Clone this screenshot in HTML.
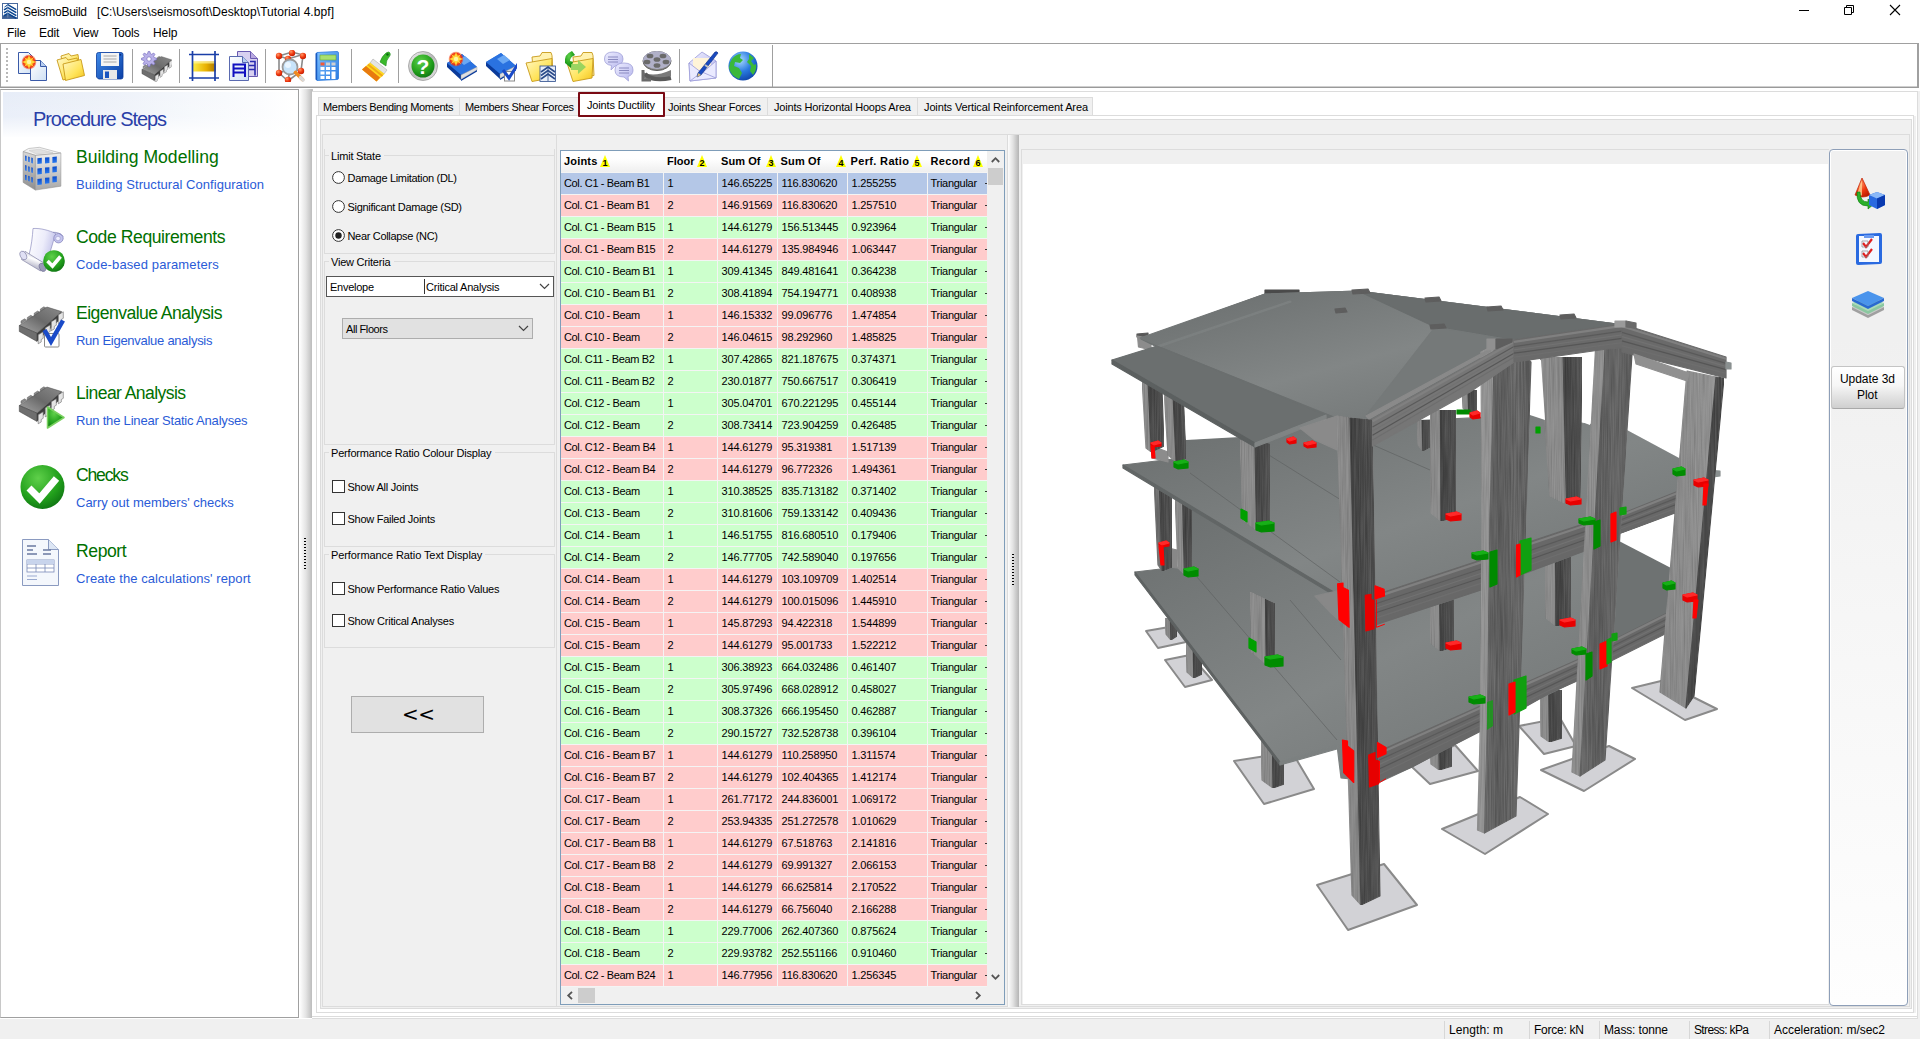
<!DOCTYPE html>
<html><head><meta charset="utf-8"><title>SeismoBuild</title>
<style>
*{box-sizing:border-box;margin:0;padding:0}
html,body{width:1920px;height:1039px;overflow:hidden;background:#fff}
body{position:relative;font-family:"Liberation Sans",sans-serif;font-size:12px;color:#000}
.a{position:absolute}
.t{position:absolute;white-space:pre;line-height:1}
.seg{font-size:12px;letter-spacing:-0.25px}
.tah{font-size:11px;letter-spacing:-0.32px}
.num{font-size:11px;letter-spacing:0px}
.b{font-weight:bold;letter-spacing:0.25px}
.ln{position:absolute;background:#dcdcdc}
.bx{position:absolute;border:1px solid #dcdcdc}
.gb{position:absolute;border:1px solid #dcdcdc}
.gbl{position:absolute;background:#f0f0f0;padding:0 2px;white-space:pre;font-size:11px;letter-spacing:-0.32px;line-height:1}
.sep{position:absolute;width:1px;background:#a0a0a0;top:49px;height:34px}
.row{position:absolute;left:561px;width:426px;height:21px}
.c{position:absolute;top:0;height:21px}
.c span{position:absolute;top:5px;white-space:pre;font-size:11px;line-height:1}
.r .c{background:#ffcccc}.g .c{background:#ccffcc}.s .c{background:#b4c7e7}
.ph{color:#007000;font-size:17.6px;letter-spacing:0px}
.ps{color:#2a5bd7;font-size:13px;letter-spacing:0.05px}
</style></head>
<body>
<div class="t seg" style="left:23px;top:6px;letter-spacing:-0.270px;font-size:12px;">SeismoBuild</div>
<div class="t seg" style="left:97px;top:6px;letter-spacing:0.062px;font-size:12px;">[C:\Users\seismosoft\Desktop\Tutorial 4.bpf]</div>
<svg class="a" style="left:1780px;top:0" width="140" height="22" viewBox="0 0 140 22"><path d="M19 10.5h10" stroke="#000" stroke-width="1" fill="none"/><path d="M64.5 7.5h7v7h-7z M66.5 7.5v-2h7v7h-2" stroke="#000" stroke-width="1" fill="none"/><path d="M110 5l10 10M120 5l-10 10" stroke="#000" stroke-width="1.1" fill="none"/></svg>
<div class="t seg" style="left:7px;top:27px;letter-spacing:-0.1px">File</div>
<div class="t seg" style="left:39px;top:27px;letter-spacing:-0.1px">Edit</div>
<div class="t seg" style="left:73px;top:27px;letter-spacing:-0.1px">View</div>
<div class="t seg" style="left:112px;top:27px;letter-spacing:-0.1px">Tools</div>
<div class="t seg" style="left:153px;top:27px;letter-spacing:-0.1px">Help</div>
<div class="a" style="left:0;top:43px;width:1919px;height:45px;border:1px solid #a0a0a0;border-bottom:1px solid #9a9a9a;border-right:2px solid #a0a0a0;background:#fff;box-shadow:inset 0 -1px 0 #cfcfcf"></div>
<div class="a" style="left:6px;top:48px;width:2px;height:35px;background:repeating-linear-gradient(#b8b8b8 0 2px,#fff 2px 4px)"></div>
<div class="sep" style="left:132px;"></div>
<div class="sep" style="left:179px;"></div>
<div class="sep" style="left:265px;"></div>
<div class="sep" style="left:351px;"></div>
<div class="sep" style="left:398px;"></div>
<div class="sep" style="left:679px;"></div>
<div class="sep" style="left:772px;top:45px;height:42px"></div>
<div class="a" style="left:0;top:89px;width:299px;height:929px;border:1px solid #a0a0a0;border-left:1px solid #c8c8c8;background:#fff"></div>
<div class="a" style="left:3px;top:92px;width:291px;height:45px;background:linear-gradient(to bottom,rgba(255,255,255,0) 0,rgba(255,255,255,0.15) 55%,rgba(255,255,255,0.95) 100%),linear-gradient(to right,#e7edf8 0,#edf1f9 35%,#f5f8fc 65%,#fbfcfe 88%,#fff 100%)"></div>
<div class="t " style="left:33px;top:109px;color:#2a3fa8;letter-spacing:-1.070px;font-size:20px;">Procedure Steps</div>
<div class="t ph" style="left:76px;top:149px;letter-spacing:-0.006px;font-size:17.6px;">Building Modelling</div>
<div class="t ps" style="left:76px;top:178px;letter-spacing:0.049px;font-size:13px;">Building Structural Configuration</div>
<div class="t ph" style="left:76px;top:229px;letter-spacing:-0.437px;font-size:17.6px;">Code Requirements</div>
<div class="t ps" style="left:76px;top:258px;letter-spacing:0.125px;font-size:13px;">Code-based parameters</div>
<div class="t ph" style="left:76px;top:305px;letter-spacing:-0.556px;font-size:17.6px;">Eigenvalue Analysis</div>
<div class="t ps" style="left:76px;top:334px;letter-spacing:-0.267px;font-size:13px;">Run Eigenvalue analysis</div>
<div class="t ph" style="left:76px;top:385px;letter-spacing:-0.596px;font-size:17.6px;">Linear Analysis</div>
<div class="t ps" style="left:76px;top:414px;letter-spacing:-0.192px;font-size:13px;">Run the Linear Static Analyses</div>
<div class="t ph" style="left:76px;top:467px;letter-spacing:-1.194px;font-size:17.6px;">Checks</div>
<div class="t ps" style="left:76px;top:496px;letter-spacing:-0.005px;font-size:13px;">Carry out members' checks</div>
<div class="t ph" style="left:76px;top:543px;letter-spacing:-0.422px;font-size:17.6px;">Report</div>
<div class="t ps" style="left:76px;top:572px;letter-spacing:0.080px;font-size:13px;">Create the calculations' report</div>
<div class="a" style="left:300px;top:89px;width:13px;height:929px;background:linear-gradient(90deg,#fdfdfd,#e4e4e4 45%,#bdbdbd 92%,#c8c8c8)"></div>
<div class="a" style="left:304px;top:538px;width:2px;height:32px;background:repeating-linear-gradient(#000 0 1px,transparent 1px 3px)"></div>
<div class="bx" style="left:312px;top:91px;width:1606px;height:928px;background:#fff;border-left:none"></div>
<div class="a" style="left:1918px;top:91px;width:2px;height:928px;background:#f0f0f0"></div>
<div class="ln" style="left:312px;top:1016px;width:1606px;height:1px"></div>
<div class="bx" style="left:318px;top:97px;width:142px;height:19px;background:#f0f0f0;border-bottom:none"></div>
<div class="bx" style="left:459px;top:97px;width:120px;height:19px;background:#f0f0f0;border-bottom:none"></div>
<div class="bx" style="left:664px;top:97px;width:104px;height:19px;background:#f0f0f0;border-bottom:none"></div>
<div class="bx" style="left:767px;top:97px;width:151px;height:19px;background:#f0f0f0;border-bottom:none"></div>
<div class="bx" style="left:917px;top:97px;width:176px;height:19px;background:#f0f0f0;border-bottom:none"></div>
<div class="bx" style="left:316px;top:115px;width:1598px;height:898px;background:#fff"></div>
<div class="a" style="left:1914px;top:116px;width:2px;height:897px;background:#f0f0f0"></div>
<div class="t tah" style="left:323px;top:102px;letter-spacing:-0.321px;font-size:11px;">Members Bending Moments</div>
<div class="t tah" style="left:465px;top:102px;letter-spacing:-0.312px;font-size:11px;">Members Shear Forces</div>
<div class="t tah" style="left:668px;top:102px;letter-spacing:-0.268px;font-size:11px;">Joints Shear Forces</div>
<div class="t tah" style="left:774px;top:102px;letter-spacing:-0.180px;font-size:11px;">Joints Horizontal Hoops Area</div>
<div class="t tah" style="left:924px;top:102px;letter-spacing:-0.125px;font-size:11px;">Joints Vertical Reinforcement Area</div>
<div class="a" style="left:578px;top:92px;width:87px;height:25px;border:2.500px solid #7a0a14;background:#fff;border-radius:1px"></div>
<div class="t tah" style="left:587px;top:100px;letter-spacing:-0.153px;font-size:11px;">Joints Ductility</div>
<div class="bx" style="left:320px;top:119px;width:1592px;height:890px;background:#f0f0f0"></div>
<div class="bx" style="left:322px;top:134px;width:1588px;height:873px;background:#f0f0f0"></div>
<div class="a" style="left:0;top:1019px;width:1920px;height:20px;background:#f0f0f0"></div>
<div class="ln" style="left:1444px;top:1021px;width:1px;height:18px;background:#d7d7d7"></div>
<div class="ln" style="left:1529px;top:1021px;width:1px;height:18px;background:#d7d7d7"></div>
<div class="ln" style="left:1599px;top:1021px;width:1px;height:18px;background:#d7d7d7"></div>
<div class="ln" style="left:1689px;top:1021px;width:1px;height:18px;background:#d7d7d7"></div>
<div class="ln" style="left:1769px;top:1021px;width:1px;height:18px;background:#d7d7d7"></div>
<div class="t seg" style="left:1449px;top:1024px;letter-spacing:0.078px;font-size:12px;">Length: m</div>
<div class="t seg" style="left:1534px;top:1024px;letter-spacing:-0.252px;font-size:12px;">Force: kN</div>
<div class="t seg" style="left:1604px;top:1024px;letter-spacing:-0.138px;font-size:12px;">Mass: tonne</div>
<div class="t seg" style="left:1694px;top:1024px;letter-spacing:-0.636px;font-size:12px;">Stress: kPa</div>
<div class="t seg" style="left:1774px;top:1024px;letter-spacing:-0.021px;font-size:12px;">Acceleration: m/sec2</div>
<div class="ln" style="left:556px;top:135px;width:1px;height:871px"></div>
<div class="bx" style="left:324px;top:149px;width:231px;height:10px;border-bottom:none;border-top:none"></div>
<div class="gb" style="left:324px;top:155px;width:231px;height:99px"></div><div class="a" style="left:329px;top:155px;width:55px;height:1px;background:#f0f0f0"></div><div class="t tah" style="left:331px;top:151px;letter-spacing:-0.197px;font-size:11px;">Limit State</div>
<div class="gb" style="left:324px;top:261px;width:231px;height:184px"></div><div class="a" style="left:329px;top:261px;width:64.5px;height:1px;background:#f0f0f0"></div><div class="t tah" style="left:331px;top:257px;letter-spacing:-0.221px;font-size:11px;">View Criteria</div>
<div class="gb" style="left:324px;top:452px;width:231px;height:95px"></div><div class="a" style="left:329px;top:452px;width:165.5px;height:1px;background:#f0f0f0"></div><div class="t tah" style="left:331px;top:448px;letter-spacing:-0.187px;font-size:11px;">Performance Ratio Colour Display</div>
<div class="gb" style="left:324px;top:554px;width:231px;height:94px"></div><div class="a" style="left:329px;top:554px;width:156.3px;height:1px;background:#f0f0f0"></div><div class="t tah" style="left:331px;top:550px;letter-spacing:-0.089px;font-size:11px;">Performance Ratio Text Display</div>
<svg class="a" style="left:332px;top:171px" width="13" height="13"><circle cx="6.5" cy="6.5" r="5.9" fill="#fff" stroke="#333" stroke-width="1"/></svg>
<div class="t tah" style="left:347.5px;top:173px;letter-spacing:-0.317px;font-size:11px;">Damage Limitation (DL)</div>
<svg class="a" style="left:332px;top:200px" width="13" height="13"><circle cx="6.5" cy="6.5" r="5.9" fill="#fff" stroke="#333" stroke-width="1"/></svg>
<div class="t tah" style="left:347.5px;top:202px;letter-spacing:-0.298px;font-size:11px;">Significant Damage (SD)</div>
<svg class="a" style="left:332px;top:229px" width="13" height="13"><circle cx="6.5" cy="6.5" r="5.9" fill="#fff" stroke="#333" stroke-width="1"/><circle cx="6.5" cy="6.5" r="3.2" fill="#222"/></svg>
<div class="t tah" style="left:347.5px;top:231px;letter-spacing:-0.323px;font-size:11px;">Near Collapse (NC)</div>
<div class="a" style="left:326px;top:276px;width:228px;height:21px;border:1px solid #555;background:#fff"></div>
<div class="a" style="left:424px;top:279px;width:1px;height:15px;background:#333"></div>
<div class="t tah" style="left:330px;top:282px;letter-spacing:-0.268px;font-size:11px;">Envelope</div>
<div class="t tah" style="left:426px;top:282px;letter-spacing:-0.221px;font-size:11px;">Critical Analysis</div>
<svg class="a" style="left:539px;top:283px" width="11" height="7"><path d="M1 1l4.5 4.5L10 1" fill="none" stroke="#444" stroke-width="1.2"/></svg>
<div class="a" style="left:342px;top:318px;width:191px;height:21px;border:1px solid #adadad;background:#e1e1e1"></div>
<div class="t tah" style="left:346px;top:324px;letter-spacing:-0.427px;font-size:11px;">All Floors</div>
<svg class="a" style="left:518px;top:325px" width="11" height="7"><path d="M1 1l4.5 4.5L10 1" fill="none" stroke="#444" stroke-width="1.2"/></svg>
<div class="a" style="left:332px;top:480px;width:13px;height:13px;border:1px solid #333;background:#fff"></div>
<div class="t tah" style="left:347.5px;top:482px;letter-spacing:-0.213px;font-size:11px;">Show All Joints</div>
<div class="a" style="left:332px;top:512px;width:13px;height:13px;border:1px solid #333;background:#fff"></div>
<div class="t tah" style="left:347.5px;top:514px;letter-spacing:-0.272px;font-size:11px;">Show Failed Joints</div>
<div class="a" style="left:332px;top:582px;width:13px;height:13px;border:1px solid #333;background:#fff"></div>
<div class="t tah" style="left:347.5px;top:584px;letter-spacing:-0.220px;font-size:11px;">Show Performance Ratio Values</div>
<div class="a" style="left:332px;top:614px;width:13px;height:13px;border:1px solid #333;background:#fff"></div>
<div class="t tah" style="left:347.5px;top:616px;letter-spacing:-0.218px;font-size:11px;">Show Critical Analyses</div>
<div class="a" style="left:351px;top:696px;width:133px;height:37px;border:1px solid #adadad;background:#e1e1e1"></div>
<div class="t " style="left:402px;top:704px;font-size:20px;letter-spacing:-0.5px;font-family:'DejaVu Sans','Liberation Sans',sans-serif">&lt;&lt;</div>
<div class="a" style="left:560px;top:150px;width:445px;height:855px;border:1px solid #7f9db9;background:#f4f4f4"></div>
<div class="a" style="left:561px;top:151px;width:426px;height:21px;background:linear-gradient(#fff 0,#fff 35%,#efefef 100%)"></div>
<div class="t tah b" style="left:564px;top:156px;letter-spacing:0.179px;font-size:11px;">Joints</div>
<svg class="a" style="left:600px;top:154px" width="10" height="13"><path d="M0 13L5 1L10 13z" fill="#ffff00"/><text x="5" y="12" font-family="Liberation Sans,sans-serif" font-size="9" font-weight="bold" text-anchor="middle" fill="#000">1</text></svg>
<div class="t tah b" style="left:667px;top:156px;letter-spacing:0.000px;font-size:11px;">Floor</div>
<svg class="a" style="left:697px;top:154px" width="10" height="13"><path d="M0 13L5 1L10 13z" fill="#ffff00"/><text x="5" y="12" font-family="Liberation Sans,sans-serif" font-size="9" font-weight="bold" text-anchor="middle" fill="#000">2</text></svg>
<div class="t tah b" style="left:721px;top:156px;letter-spacing:0.075px;font-size:11px;">Sum Of</div>
<svg class="a" style="left:766px;top:154px" width="10" height="13"><path d="M0 13L5 1L10 13z" fill="#ffff00"/><text x="5" y="12" font-family="Liberation Sans,sans-serif" font-size="9" font-weight="bold" text-anchor="middle" fill="#000">3</text></svg>
<div class="t tah b" style="left:780.5px;top:156px;letter-spacing:0.175px;font-size:11px;">Sum Of</div>
<svg class="a" style="left:836px;top:154px" width="10" height="13"><path d="M0 13L5 1L10 13z" fill="#ffff00"/><text x="5" y="12" font-family="Liberation Sans,sans-serif" font-size="9" font-weight="bold" text-anchor="middle" fill="#000">4</text></svg>
<div class="t tah b" style="left:850.5px;top:156px;letter-spacing:0.348px;font-size:11px;">Perf. Ratio</div>
<svg class="a" style="left:912px;top:154px" width="10" height="13"><path d="M0 13L5 1L10 13z" fill="#ffff00"/><text x="5" y="12" font-family="Liberation Sans,sans-serif" font-size="9" font-weight="bold" text-anchor="middle" fill="#000">5</text></svg>
<div class="t tah b" style="left:930.5px;top:156px;letter-spacing:0.319px;font-size:11px;">Record</div>
<svg class="a" style="left:972.5px;top:154px" width="10" height="13"><path d="M0 13L5 1L10 13z" fill="#ffff00"/><text x="5" y="12" font-family="Liberation Sans,sans-serif" font-size="9" font-weight="bold" text-anchor="middle" fill="#000">6</text></svg>
<div class="row s" style="top:173px"><div class="c" style="left:0px;width:102px"><span style="left:3px;letter-spacing:-0.36px">Col. C1 - Beam B1</span></div><div class="c" style="left:103px;width:53px"><span style="left:3.5px;letter-spacing:0px">1</span></div><div class="c" style="left:157px;width:59px"><span style="left:3.5px;letter-spacing:-0.15px">146.65225</span></div><div class="c" style="left:217px;width:69px"><span style="left:3.5px;letter-spacing:-0.15px">116.830620</span></div><div class="c" style="left:287px;width:79px"><span style="left:3.5px;letter-spacing:-0.15px">1.255255</span></div><div class="c" style="left:367px;width:59px"><span style="left:2.5px;letter-spacing:-0.28px">Triangular</span></div><div class="a" style="left:424px;top:10px;width:2px;height:1px;background:#333"></div></div>
<div class="row r" style="top:195px"><div class="c" style="left:0px;width:102px"><span style="left:3px;letter-spacing:-0.36px">Col. C1 - Beam B1</span></div><div class="c" style="left:103px;width:53px"><span style="left:3.5px;letter-spacing:0px">2</span></div><div class="c" style="left:157px;width:59px"><span style="left:3.5px;letter-spacing:-0.15px">146.91569</span></div><div class="c" style="left:217px;width:69px"><span style="left:3.5px;letter-spacing:-0.15px">116.830620</span></div><div class="c" style="left:287px;width:79px"><span style="left:3.5px;letter-spacing:-0.15px">1.257510</span></div><div class="c" style="left:367px;width:59px"><span style="left:2.5px;letter-spacing:-0.28px">Triangular</span></div><div class="a" style="left:424px;top:10px;width:2px;height:1px;background:#333"></div></div>
<div class="row g" style="top:217px"><div class="c" style="left:0px;width:102px"><span style="left:3px;letter-spacing:-0.36px">Col. C1 - Beam B15</span></div><div class="c" style="left:103px;width:53px"><span style="left:3.5px;letter-spacing:0px">1</span></div><div class="c" style="left:157px;width:59px"><span style="left:3.5px;letter-spacing:-0.15px">144.61279</span></div><div class="c" style="left:217px;width:69px"><span style="left:3.5px;letter-spacing:-0.15px">156.513445</span></div><div class="c" style="left:287px;width:79px"><span style="left:3.5px;letter-spacing:-0.15px">0.923964</span></div><div class="c" style="left:367px;width:59px"><span style="left:2.5px;letter-spacing:-0.28px">Triangular</span></div><div class="a" style="left:424px;top:10px;width:2px;height:1px;background:#333"></div></div>
<div class="row r" style="top:239px"><div class="c" style="left:0px;width:102px"><span style="left:3px;letter-spacing:-0.36px">Col. C1 - Beam B15</span></div><div class="c" style="left:103px;width:53px"><span style="left:3.5px;letter-spacing:0px">2</span></div><div class="c" style="left:157px;width:59px"><span style="left:3.5px;letter-spacing:-0.15px">144.61279</span></div><div class="c" style="left:217px;width:69px"><span style="left:3.5px;letter-spacing:-0.15px">135.984946</span></div><div class="c" style="left:287px;width:79px"><span style="left:3.5px;letter-spacing:-0.15px">1.063447</span></div><div class="c" style="left:367px;width:59px"><span style="left:2.5px;letter-spacing:-0.28px">Triangular</span></div><div class="a" style="left:424px;top:10px;width:2px;height:1px;background:#333"></div></div>
<div class="row g" style="top:261px"><div class="c" style="left:0px;width:102px"><span style="left:3px;letter-spacing:-0.36px">Col. C10 - Beam B1</span></div><div class="c" style="left:103px;width:53px"><span style="left:3.5px;letter-spacing:0px">1</span></div><div class="c" style="left:157px;width:59px"><span style="left:3.5px;letter-spacing:-0.15px">309.41345</span></div><div class="c" style="left:217px;width:69px"><span style="left:3.5px;letter-spacing:-0.15px">849.481641</span></div><div class="c" style="left:287px;width:79px"><span style="left:3.5px;letter-spacing:-0.15px">0.364238</span></div><div class="c" style="left:367px;width:59px"><span style="left:2.5px;letter-spacing:-0.28px">Triangular</span></div><div class="a" style="left:424px;top:10px;width:2px;height:1px;background:#333"></div></div>
<div class="row g" style="top:283px"><div class="c" style="left:0px;width:102px"><span style="left:3px;letter-spacing:-0.36px">Col. C10 - Beam B1</span></div><div class="c" style="left:103px;width:53px"><span style="left:3.5px;letter-spacing:0px">2</span></div><div class="c" style="left:157px;width:59px"><span style="left:3.5px;letter-spacing:-0.15px">308.41894</span></div><div class="c" style="left:217px;width:69px"><span style="left:3.5px;letter-spacing:-0.15px">754.194771</span></div><div class="c" style="left:287px;width:79px"><span style="left:3.5px;letter-spacing:-0.15px">0.408938</span></div><div class="c" style="left:367px;width:59px"><span style="left:2.5px;letter-spacing:-0.28px">Triangular</span></div><div class="a" style="left:424px;top:10px;width:2px;height:1px;background:#333"></div></div>
<div class="row r" style="top:305px"><div class="c" style="left:0px;width:102px"><span style="left:3px;letter-spacing:-0.36px">Col. C10 - Beam</span></div><div class="c" style="left:103px;width:53px"><span style="left:3.5px;letter-spacing:0px">1</span></div><div class="c" style="left:157px;width:59px"><span style="left:3.5px;letter-spacing:-0.15px">146.15332</span></div><div class="c" style="left:217px;width:69px"><span style="left:3.5px;letter-spacing:-0.15px">99.096776</span></div><div class="c" style="left:287px;width:79px"><span style="left:3.5px;letter-spacing:-0.15px">1.474854</span></div><div class="c" style="left:367px;width:59px"><span style="left:2.5px;letter-spacing:-0.28px">Triangular</span></div><div class="a" style="left:424px;top:10px;width:2px;height:1px;background:#333"></div></div>
<div class="row r" style="top:327px"><div class="c" style="left:0px;width:102px"><span style="left:3px;letter-spacing:-0.36px">Col. C10 - Beam</span></div><div class="c" style="left:103px;width:53px"><span style="left:3.5px;letter-spacing:0px">2</span></div><div class="c" style="left:157px;width:59px"><span style="left:3.5px;letter-spacing:-0.15px">146.04615</span></div><div class="c" style="left:217px;width:69px"><span style="left:3.5px;letter-spacing:-0.15px">98.292960</span></div><div class="c" style="left:287px;width:79px"><span style="left:3.5px;letter-spacing:-0.15px">1.485825</span></div><div class="c" style="left:367px;width:59px"><span style="left:2.5px;letter-spacing:-0.28px">Triangular</span></div><div class="a" style="left:424px;top:10px;width:2px;height:1px;background:#333"></div></div>
<div class="row g" style="top:349px"><div class="c" style="left:0px;width:102px"><span style="left:3px;letter-spacing:-0.36px">Col. C11 - Beam B2</span></div><div class="c" style="left:103px;width:53px"><span style="left:3.5px;letter-spacing:0px">1</span></div><div class="c" style="left:157px;width:59px"><span style="left:3.5px;letter-spacing:-0.15px">307.42865</span></div><div class="c" style="left:217px;width:69px"><span style="left:3.5px;letter-spacing:-0.15px">821.187675</span></div><div class="c" style="left:287px;width:79px"><span style="left:3.5px;letter-spacing:-0.15px">0.374371</span></div><div class="c" style="left:367px;width:59px"><span style="left:2.5px;letter-spacing:-0.28px">Triangular</span></div><div class="a" style="left:424px;top:10px;width:2px;height:1px;background:#333"></div></div>
<div class="row g" style="top:371px"><div class="c" style="left:0px;width:102px"><span style="left:3px;letter-spacing:-0.36px">Col. C11 - Beam B2</span></div><div class="c" style="left:103px;width:53px"><span style="left:3.5px;letter-spacing:0px">2</span></div><div class="c" style="left:157px;width:59px"><span style="left:3.5px;letter-spacing:-0.15px">230.01877</span></div><div class="c" style="left:217px;width:69px"><span style="left:3.5px;letter-spacing:-0.15px">750.667517</span></div><div class="c" style="left:287px;width:79px"><span style="left:3.5px;letter-spacing:-0.15px">0.306419</span></div><div class="c" style="left:367px;width:59px"><span style="left:2.5px;letter-spacing:-0.28px">Triangular</span></div><div class="a" style="left:424px;top:10px;width:2px;height:1px;background:#333"></div></div>
<div class="row g" style="top:393px"><div class="c" style="left:0px;width:102px"><span style="left:3px;letter-spacing:-0.36px">Col. C12 - Beam</span></div><div class="c" style="left:103px;width:53px"><span style="left:3.5px;letter-spacing:0px">1</span></div><div class="c" style="left:157px;width:59px"><span style="left:3.5px;letter-spacing:-0.15px">305.04701</span></div><div class="c" style="left:217px;width:69px"><span style="left:3.5px;letter-spacing:-0.15px">670.221295</span></div><div class="c" style="left:287px;width:79px"><span style="left:3.5px;letter-spacing:-0.15px">0.455144</span></div><div class="c" style="left:367px;width:59px"><span style="left:2.5px;letter-spacing:-0.28px">Triangular</span></div><div class="a" style="left:424px;top:10px;width:2px;height:1px;background:#333"></div></div>
<div class="row g" style="top:415px"><div class="c" style="left:0px;width:102px"><span style="left:3px;letter-spacing:-0.36px">Col. C12 - Beam</span></div><div class="c" style="left:103px;width:53px"><span style="left:3.5px;letter-spacing:0px">2</span></div><div class="c" style="left:157px;width:59px"><span style="left:3.5px;letter-spacing:-0.15px">308.73414</span></div><div class="c" style="left:217px;width:69px"><span style="left:3.5px;letter-spacing:-0.15px">723.904259</span></div><div class="c" style="left:287px;width:79px"><span style="left:3.5px;letter-spacing:-0.15px">0.426485</span></div><div class="c" style="left:367px;width:59px"><span style="left:2.5px;letter-spacing:-0.28px">Triangular</span></div><div class="a" style="left:424px;top:10px;width:2px;height:1px;background:#333"></div></div>
<div class="row r" style="top:437px"><div class="c" style="left:0px;width:102px"><span style="left:3px;letter-spacing:-0.36px">Col. C12 - Beam B4</span></div><div class="c" style="left:103px;width:53px"><span style="left:3.5px;letter-spacing:0px">1</span></div><div class="c" style="left:157px;width:59px"><span style="left:3.5px;letter-spacing:-0.15px">144.61279</span></div><div class="c" style="left:217px;width:69px"><span style="left:3.5px;letter-spacing:-0.15px">95.319381</span></div><div class="c" style="left:287px;width:79px"><span style="left:3.5px;letter-spacing:-0.15px">1.517139</span></div><div class="c" style="left:367px;width:59px"><span style="left:2.5px;letter-spacing:-0.28px">Triangular</span></div><div class="a" style="left:424px;top:10px;width:2px;height:1px;background:#333"></div></div>
<div class="row r" style="top:459px"><div class="c" style="left:0px;width:102px"><span style="left:3px;letter-spacing:-0.36px">Col. C12 - Beam B4</span></div><div class="c" style="left:103px;width:53px"><span style="left:3.5px;letter-spacing:0px">2</span></div><div class="c" style="left:157px;width:59px"><span style="left:3.5px;letter-spacing:-0.15px">144.61279</span></div><div class="c" style="left:217px;width:69px"><span style="left:3.5px;letter-spacing:-0.15px">96.772326</span></div><div class="c" style="left:287px;width:79px"><span style="left:3.5px;letter-spacing:-0.15px">1.494361</span></div><div class="c" style="left:367px;width:59px"><span style="left:2.5px;letter-spacing:-0.28px">Triangular</span></div><div class="a" style="left:424px;top:10px;width:2px;height:1px;background:#333"></div></div>
<div class="row g" style="top:481px"><div class="c" style="left:0px;width:102px"><span style="left:3px;letter-spacing:-0.36px">Col. C13 - Beam</span></div><div class="c" style="left:103px;width:53px"><span style="left:3.5px;letter-spacing:0px">1</span></div><div class="c" style="left:157px;width:59px"><span style="left:3.5px;letter-spacing:-0.15px">310.38525</span></div><div class="c" style="left:217px;width:69px"><span style="left:3.5px;letter-spacing:-0.15px">835.713182</span></div><div class="c" style="left:287px;width:79px"><span style="left:3.5px;letter-spacing:-0.15px">0.371402</span></div><div class="c" style="left:367px;width:59px"><span style="left:2.5px;letter-spacing:-0.28px">Triangular</span></div><div class="a" style="left:424px;top:10px;width:2px;height:1px;background:#333"></div></div>
<div class="row g" style="top:503px"><div class="c" style="left:0px;width:102px"><span style="left:3px;letter-spacing:-0.36px">Col. C13 - Beam</span></div><div class="c" style="left:103px;width:53px"><span style="left:3.5px;letter-spacing:0px">2</span></div><div class="c" style="left:157px;width:59px"><span style="left:3.5px;letter-spacing:-0.15px">310.81606</span></div><div class="c" style="left:217px;width:69px"><span style="left:3.5px;letter-spacing:-0.15px">759.133142</span></div><div class="c" style="left:287px;width:79px"><span style="left:3.5px;letter-spacing:-0.15px">0.409436</span></div><div class="c" style="left:367px;width:59px"><span style="left:2.5px;letter-spacing:-0.28px">Triangular</span></div><div class="a" style="left:424px;top:10px;width:2px;height:1px;background:#333"></div></div>
<div class="row g" style="top:525px"><div class="c" style="left:0px;width:102px"><span style="left:3px;letter-spacing:-0.36px">Col. C14 - Beam</span></div><div class="c" style="left:103px;width:53px"><span style="left:3.5px;letter-spacing:0px">1</span></div><div class="c" style="left:157px;width:59px"><span style="left:3.5px;letter-spacing:-0.15px">146.51755</span></div><div class="c" style="left:217px;width:69px"><span style="left:3.5px;letter-spacing:-0.15px">816.680510</span></div><div class="c" style="left:287px;width:79px"><span style="left:3.5px;letter-spacing:-0.15px">0.179406</span></div><div class="c" style="left:367px;width:59px"><span style="left:2.5px;letter-spacing:-0.28px">Triangular</span></div><div class="a" style="left:424px;top:10px;width:2px;height:1px;background:#333"></div></div>
<div class="row g" style="top:547px"><div class="c" style="left:0px;width:102px"><span style="left:3px;letter-spacing:-0.36px">Col. C14 - Beam</span></div><div class="c" style="left:103px;width:53px"><span style="left:3.5px;letter-spacing:0px">2</span></div><div class="c" style="left:157px;width:59px"><span style="left:3.5px;letter-spacing:-0.15px">146.77705</span></div><div class="c" style="left:217px;width:69px"><span style="left:3.5px;letter-spacing:-0.15px">742.589040</span></div><div class="c" style="left:287px;width:79px"><span style="left:3.5px;letter-spacing:-0.15px">0.197656</span></div><div class="c" style="left:367px;width:59px"><span style="left:2.5px;letter-spacing:-0.28px">Triangular</span></div><div class="a" style="left:424px;top:10px;width:2px;height:1px;background:#333"></div></div>
<div class="row r" style="top:569px"><div class="c" style="left:0px;width:102px"><span style="left:3px;letter-spacing:-0.36px">Col. C14 - Beam</span></div><div class="c" style="left:103px;width:53px"><span style="left:3.5px;letter-spacing:0px">1</span></div><div class="c" style="left:157px;width:59px"><span style="left:3.5px;letter-spacing:-0.15px">144.61279</span></div><div class="c" style="left:217px;width:69px"><span style="left:3.5px;letter-spacing:-0.15px">103.109709</span></div><div class="c" style="left:287px;width:79px"><span style="left:3.5px;letter-spacing:-0.15px">1.402514</span></div><div class="c" style="left:367px;width:59px"><span style="left:2.5px;letter-spacing:-0.28px">Triangular</span></div><div class="a" style="left:424px;top:10px;width:2px;height:1px;background:#333"></div></div>
<div class="row r" style="top:591px"><div class="c" style="left:0px;width:102px"><span style="left:3px;letter-spacing:-0.36px">Col. C14 - Beam</span></div><div class="c" style="left:103px;width:53px"><span style="left:3.5px;letter-spacing:0px">2</span></div><div class="c" style="left:157px;width:59px"><span style="left:3.5px;letter-spacing:-0.15px">144.61279</span></div><div class="c" style="left:217px;width:69px"><span style="left:3.5px;letter-spacing:-0.15px">100.015096</span></div><div class="c" style="left:287px;width:79px"><span style="left:3.5px;letter-spacing:-0.15px">1.445910</span></div><div class="c" style="left:367px;width:59px"><span style="left:2.5px;letter-spacing:-0.28px">Triangular</span></div><div class="a" style="left:424px;top:10px;width:2px;height:1px;background:#333"></div></div>
<div class="row r" style="top:613px"><div class="c" style="left:0px;width:102px"><span style="left:3px;letter-spacing:-0.36px">Col. C15 - Beam</span></div><div class="c" style="left:103px;width:53px"><span style="left:3.5px;letter-spacing:0px">1</span></div><div class="c" style="left:157px;width:59px"><span style="left:3.5px;letter-spacing:-0.15px">145.87293</span></div><div class="c" style="left:217px;width:69px"><span style="left:3.5px;letter-spacing:-0.15px">94.422318</span></div><div class="c" style="left:287px;width:79px"><span style="left:3.5px;letter-spacing:-0.15px">1.544899</span></div><div class="c" style="left:367px;width:59px"><span style="left:2.5px;letter-spacing:-0.28px">Triangular</span></div><div class="a" style="left:424px;top:10px;width:2px;height:1px;background:#333"></div></div>
<div class="row r" style="top:635px"><div class="c" style="left:0px;width:102px"><span style="left:3px;letter-spacing:-0.36px">Col. C15 - Beam</span></div><div class="c" style="left:103px;width:53px"><span style="left:3.5px;letter-spacing:0px">2</span></div><div class="c" style="left:157px;width:59px"><span style="left:3.5px;letter-spacing:-0.15px">144.61279</span></div><div class="c" style="left:217px;width:69px"><span style="left:3.5px;letter-spacing:-0.15px">95.001733</span></div><div class="c" style="left:287px;width:79px"><span style="left:3.5px;letter-spacing:-0.15px">1.522212</span></div><div class="c" style="left:367px;width:59px"><span style="left:2.5px;letter-spacing:-0.28px">Triangular</span></div><div class="a" style="left:424px;top:10px;width:2px;height:1px;background:#333"></div></div>
<div class="row g" style="top:657px"><div class="c" style="left:0px;width:102px"><span style="left:3px;letter-spacing:-0.36px">Col. C15 - Beam</span></div><div class="c" style="left:103px;width:53px"><span style="left:3.5px;letter-spacing:0px">1</span></div><div class="c" style="left:157px;width:59px"><span style="left:3.5px;letter-spacing:-0.15px">306.38923</span></div><div class="c" style="left:217px;width:69px"><span style="left:3.5px;letter-spacing:-0.15px">664.032486</span></div><div class="c" style="left:287px;width:79px"><span style="left:3.5px;letter-spacing:-0.15px">0.461407</span></div><div class="c" style="left:367px;width:59px"><span style="left:2.5px;letter-spacing:-0.28px">Triangular</span></div><div class="a" style="left:424px;top:10px;width:2px;height:1px;background:#333"></div></div>
<div class="row g" style="top:679px"><div class="c" style="left:0px;width:102px"><span style="left:3px;letter-spacing:-0.36px">Col. C15 - Beam</span></div><div class="c" style="left:103px;width:53px"><span style="left:3.5px;letter-spacing:0px">2</span></div><div class="c" style="left:157px;width:59px"><span style="left:3.5px;letter-spacing:-0.15px">305.97496</span></div><div class="c" style="left:217px;width:69px"><span style="left:3.5px;letter-spacing:-0.15px">668.028912</span></div><div class="c" style="left:287px;width:79px"><span style="left:3.5px;letter-spacing:-0.15px">0.458027</span></div><div class="c" style="left:367px;width:59px"><span style="left:2.5px;letter-spacing:-0.28px">Triangular</span></div><div class="a" style="left:424px;top:10px;width:2px;height:1px;background:#333"></div></div>
<div class="row g" style="top:701px"><div class="c" style="left:0px;width:102px"><span style="left:3px;letter-spacing:-0.36px">Col. C16 - Beam</span></div><div class="c" style="left:103px;width:53px"><span style="left:3.5px;letter-spacing:0px">1</span></div><div class="c" style="left:157px;width:59px"><span style="left:3.5px;letter-spacing:-0.15px">308.37326</span></div><div class="c" style="left:217px;width:69px"><span style="left:3.5px;letter-spacing:-0.15px">666.195450</span></div><div class="c" style="left:287px;width:79px"><span style="left:3.5px;letter-spacing:-0.15px">0.462887</span></div><div class="c" style="left:367px;width:59px"><span style="left:2.5px;letter-spacing:-0.28px">Triangular</span></div><div class="a" style="left:424px;top:10px;width:2px;height:1px;background:#333"></div></div>
<div class="row g" style="top:723px"><div class="c" style="left:0px;width:102px"><span style="left:3px;letter-spacing:-0.36px">Col. C16 - Beam</span></div><div class="c" style="left:103px;width:53px"><span style="left:3.5px;letter-spacing:0px">2</span></div><div class="c" style="left:157px;width:59px"><span style="left:3.5px;letter-spacing:-0.15px">290.15727</span></div><div class="c" style="left:217px;width:69px"><span style="left:3.5px;letter-spacing:-0.15px">732.528738</span></div><div class="c" style="left:287px;width:79px"><span style="left:3.5px;letter-spacing:-0.15px">0.396104</span></div><div class="c" style="left:367px;width:59px"><span style="left:2.5px;letter-spacing:-0.28px">Triangular</span></div><div class="a" style="left:424px;top:10px;width:2px;height:1px;background:#333"></div></div>
<div class="row r" style="top:745px"><div class="c" style="left:0px;width:102px"><span style="left:3px;letter-spacing:-0.36px">Col. C16 - Beam B7</span></div><div class="c" style="left:103px;width:53px"><span style="left:3.5px;letter-spacing:0px">1</span></div><div class="c" style="left:157px;width:59px"><span style="left:3.5px;letter-spacing:-0.15px">144.61279</span></div><div class="c" style="left:217px;width:69px"><span style="left:3.5px;letter-spacing:-0.15px">110.258950</span></div><div class="c" style="left:287px;width:79px"><span style="left:3.5px;letter-spacing:-0.15px">1.311574</span></div><div class="c" style="left:367px;width:59px"><span style="left:2.5px;letter-spacing:-0.28px">Triangular</span></div><div class="a" style="left:424px;top:10px;width:2px;height:1px;background:#333"></div></div>
<div class="row r" style="top:767px"><div class="c" style="left:0px;width:102px"><span style="left:3px;letter-spacing:-0.36px">Col. C16 - Beam B7</span></div><div class="c" style="left:103px;width:53px"><span style="left:3.5px;letter-spacing:0px">2</span></div><div class="c" style="left:157px;width:59px"><span style="left:3.5px;letter-spacing:-0.15px">144.61279</span></div><div class="c" style="left:217px;width:69px"><span style="left:3.5px;letter-spacing:-0.15px">102.404365</span></div><div class="c" style="left:287px;width:79px"><span style="left:3.5px;letter-spacing:-0.15px">1.412174</span></div><div class="c" style="left:367px;width:59px"><span style="left:2.5px;letter-spacing:-0.28px">Triangular</span></div><div class="a" style="left:424px;top:10px;width:2px;height:1px;background:#333"></div></div>
<div class="row r" style="top:789px"><div class="c" style="left:0px;width:102px"><span style="left:3px;letter-spacing:-0.36px">Col. C17 - Beam</span></div><div class="c" style="left:103px;width:53px"><span style="left:3.5px;letter-spacing:0px">1</span></div><div class="c" style="left:157px;width:59px"><span style="left:3.5px;letter-spacing:-0.15px">261.77172</span></div><div class="c" style="left:217px;width:69px"><span style="left:3.5px;letter-spacing:-0.15px">244.836001</span></div><div class="c" style="left:287px;width:79px"><span style="left:3.5px;letter-spacing:-0.15px">1.069172</span></div><div class="c" style="left:367px;width:59px"><span style="left:2.5px;letter-spacing:-0.28px">Triangular</span></div><div class="a" style="left:424px;top:10px;width:2px;height:1px;background:#333"></div></div>
<div class="row r" style="top:811px"><div class="c" style="left:0px;width:102px"><span style="left:3px;letter-spacing:-0.36px">Col. C17 - Beam</span></div><div class="c" style="left:103px;width:53px"><span style="left:3.5px;letter-spacing:0px">2</span></div><div class="c" style="left:157px;width:59px"><span style="left:3.5px;letter-spacing:-0.15px">253.94335</span></div><div class="c" style="left:217px;width:69px"><span style="left:3.5px;letter-spacing:-0.15px">251.272578</span></div><div class="c" style="left:287px;width:79px"><span style="left:3.5px;letter-spacing:-0.15px">1.010629</span></div><div class="c" style="left:367px;width:59px"><span style="left:2.5px;letter-spacing:-0.28px">Triangular</span></div><div class="a" style="left:424px;top:10px;width:2px;height:1px;background:#333"></div></div>
<div class="row r" style="top:833px"><div class="c" style="left:0px;width:102px"><span style="left:3px;letter-spacing:-0.36px">Col. C17 - Beam B8</span></div><div class="c" style="left:103px;width:53px"><span style="left:3.5px;letter-spacing:0px">1</span></div><div class="c" style="left:157px;width:59px"><span style="left:3.5px;letter-spacing:-0.15px">144.61279</span></div><div class="c" style="left:217px;width:69px"><span style="left:3.5px;letter-spacing:-0.15px">67.518763</span></div><div class="c" style="left:287px;width:79px"><span style="left:3.5px;letter-spacing:-0.15px">2.141816</span></div><div class="c" style="left:367px;width:59px"><span style="left:2.5px;letter-spacing:-0.28px">Triangular</span></div><div class="a" style="left:424px;top:10px;width:2px;height:1px;background:#333"></div></div>
<div class="row r" style="top:855px"><div class="c" style="left:0px;width:102px"><span style="left:3px;letter-spacing:-0.36px">Col. C17 - Beam B8</span></div><div class="c" style="left:103px;width:53px"><span style="left:3.5px;letter-spacing:0px">2</span></div><div class="c" style="left:157px;width:59px"><span style="left:3.5px;letter-spacing:-0.15px">144.61279</span></div><div class="c" style="left:217px;width:69px"><span style="left:3.5px;letter-spacing:-0.15px">69.991327</span></div><div class="c" style="left:287px;width:79px"><span style="left:3.5px;letter-spacing:-0.15px">2.066153</span></div><div class="c" style="left:367px;width:59px"><span style="left:2.5px;letter-spacing:-0.28px">Triangular</span></div><div class="a" style="left:424px;top:10px;width:2px;height:1px;background:#333"></div></div>
<div class="row r" style="top:877px"><div class="c" style="left:0px;width:102px"><span style="left:3px;letter-spacing:-0.36px">Col. C18 - Beam</span></div><div class="c" style="left:103px;width:53px"><span style="left:3.5px;letter-spacing:0px">1</span></div><div class="c" style="left:157px;width:59px"><span style="left:3.5px;letter-spacing:-0.15px">144.61279</span></div><div class="c" style="left:217px;width:69px"><span style="left:3.5px;letter-spacing:-0.15px">66.625814</span></div><div class="c" style="left:287px;width:79px"><span style="left:3.5px;letter-spacing:-0.15px">2.170522</span></div><div class="c" style="left:367px;width:59px"><span style="left:2.5px;letter-spacing:-0.28px">Triangular</span></div><div class="a" style="left:424px;top:10px;width:2px;height:1px;background:#333"></div></div>
<div class="row r" style="top:899px"><div class="c" style="left:0px;width:102px"><span style="left:3px;letter-spacing:-0.36px">Col. C18 - Beam</span></div><div class="c" style="left:103px;width:53px"><span style="left:3.5px;letter-spacing:0px">2</span></div><div class="c" style="left:157px;width:59px"><span style="left:3.5px;letter-spacing:-0.15px">144.61279</span></div><div class="c" style="left:217px;width:69px"><span style="left:3.5px;letter-spacing:-0.15px">66.756040</span></div><div class="c" style="left:287px;width:79px"><span style="left:3.5px;letter-spacing:-0.15px">2.166288</span></div><div class="c" style="left:367px;width:59px"><span style="left:2.5px;letter-spacing:-0.28px">Triangular</span></div><div class="a" style="left:424px;top:10px;width:2px;height:1px;background:#333"></div></div>
<div class="row g" style="top:921px"><div class="c" style="left:0px;width:102px"><span style="left:3px;letter-spacing:-0.36px">Col. C18 - Beam</span></div><div class="c" style="left:103px;width:53px"><span style="left:3.5px;letter-spacing:0px">1</span></div><div class="c" style="left:157px;width:59px"><span style="left:3.5px;letter-spacing:-0.15px">229.77006</span></div><div class="c" style="left:217px;width:69px"><span style="left:3.5px;letter-spacing:-0.15px">262.407360</span></div><div class="c" style="left:287px;width:79px"><span style="left:3.5px;letter-spacing:-0.15px">0.875624</span></div><div class="c" style="left:367px;width:59px"><span style="left:2.5px;letter-spacing:-0.28px">Triangular</span></div><div class="a" style="left:424px;top:10px;width:2px;height:1px;background:#333"></div></div>
<div class="row g" style="top:943px"><div class="c" style="left:0px;width:102px"><span style="left:3px;letter-spacing:-0.36px">Col. C18 - Beam</span></div><div class="c" style="left:103px;width:53px"><span style="left:3.5px;letter-spacing:0px">2</span></div><div class="c" style="left:157px;width:59px"><span style="left:3.5px;letter-spacing:-0.15px">229.93782</span></div><div class="c" style="left:217px;width:69px"><span style="left:3.5px;letter-spacing:-0.15px">252.551166</span></div><div class="c" style="left:287px;width:79px"><span style="left:3.5px;letter-spacing:-0.15px">0.910460</span></div><div class="c" style="left:367px;width:59px"><span style="left:2.5px;letter-spacing:-0.28px">Triangular</span></div><div class="a" style="left:424px;top:10px;width:2px;height:1px;background:#333"></div></div>
<div class="row r" style="top:965px"><div class="c" style="left:0px;width:102px"><span style="left:3px;letter-spacing:-0.36px">Col. C2 - Beam B24</span></div><div class="c" style="left:103px;width:53px"><span style="left:3.5px;letter-spacing:0px">1</span></div><div class="c" style="left:157px;width:59px"><span style="left:3.5px;letter-spacing:-0.15px">146.77956</span></div><div class="c" style="left:217px;width:69px"><span style="left:3.5px;letter-spacing:-0.15px">116.830620</span></div><div class="c" style="left:287px;width:79px"><span style="left:3.5px;letter-spacing:-0.15px">1.256345</span></div><div class="c" style="left:367px;width:59px"><span style="left:2.5px;letter-spacing:-0.28px">Triangular</span></div><div class="a" style="left:424px;top:10px;width:2px;height:1px;background:#333"></div></div>
<div class="a" style="left:987px;top:151px;width:17px;height:836px;background:#f0f0f0"></div>
<div class="a" style="left:988px;top:168px;width:15px;height:17px;background:#cdcdcd"></div>
<svg class="a" style="left:991px;top:156px" width="9" height="7"><path d="M0.8 6L4.5 2.2L8.2 6" fill="none" stroke="#555" stroke-width="1.8"/></svg>
<svg class="a" style="left:991px;top:974px" width="9" height="7"><path d="M0.8 1L4.5 4.8L8.2 1" fill="none" stroke="#555" stroke-width="1.8"/></svg>
<div class="a" style="left:561px;top:987px;width:443px;height:17px;background:#f0f0f0"></div>
<div class="a" style="left:578px;top:988px;width:17px;height:15px;background:#cdcdcd"></div>
<svg class="a" style="left:566px;top:991px" width="7" height="9"><path d="M6 0.8L2.2 4.5L6 8.2" fill="none" stroke="#555" stroke-width="1.8"/></svg>
<svg class="a" style="left:975px;top:991px" width="7" height="9"><path d="M1 0.8L4.8 4.5L1 8.2" fill="none" stroke="#555" stroke-width="1.8"/></svg>
<div class="ln" style="left:1007px;top:135px;width:1px;height:871px"></div>
<div class="a" style="left:1008px;top:135px;width:11px;height:872px;background:linear-gradient(90deg,#fdfdfd,#e2e2e2 45%,#b8b8b8 95%)"></div>
<div class="a" style="left:1012px;top:554px;width:2px;height:32px;background:repeating-linear-gradient(#000 0 1px,transparent 1px 3px)"></div>
<div class="bx" style="left:1021px;top:149px;width:808px;height:856px;background:#f0f0f0;border-right:none"></div>
<div class="a" style="left:1023px;top:164px;width:805px;height:840px;background:#fff"></div>
<div class="a" style="left:1829px;top:149px;width:79px;height:857px;border:1px solid #8e9fb8;border-radius:4px;background:linear-gradient(#f0f0f0 0,#f0f0f0 22%,#f7f7f7 60%,#fefefe 100%);box-shadow:inset 0 0 0 1px #fff"></div>
<div class="a" style="left:1831px;top:366px;width:74px;height:43px;border:1px solid #c4c4c4;border-bottom-color:#a8a8a8;border-radius:3px;background:linear-gradient(#fff,#f6f6f6 45%,#e4e4e4 70%,#cfcfcf)"></div>
<div class="t seg" style="left:1840px;top:373px;letter-spacing:-0.05px">Update 3d</div>
<div class="t seg" style="left:1857px;top:389px;letter-spacing:-0.05px">Plot</div>
<svg class="a" style="left:1023px;top:164px" width="805" height="840" viewBox="1023 164 805 840">
<defs>
<linearGradient id="cd" x1="0" x2="1" y1="0" y2="0"><stop offset="0" stop-color="#424242"/><stop offset="0.5" stop-color="#4a4a4a"/><stop offset="1" stop-color="#525252"/></linearGradient>
<linearGradient id="cB" x1="0" x2="1" y1="0" y2="0"><stop offset="0" stop-color="#6a6a6a"/><stop offset="0.3" stop-color="#5c5c5c"/><stop offset="0.7" stop-color="#666666"/><stop offset="1" stop-color="#5a5a5a"/></linearGradient>
<linearGradient id="cD" x1="0" x2="1" y1="0" y2="0"><stop offset="0" stop-color="#888888"/><stop offset="0.5" stop-color="#8c8c8c"/><stop offset="1" stop-color="#929292"/></linearGradient>
<linearGradient id="bm" x1="0" x2="0" y1="0" y2="1"><stop offset="0" stop-color="#8c8c8c"/><stop offset="0.2" stop-color="#787878"/><stop offset="0.45" stop-color="#6c6c6c"/><stop offset="0.7" stop-color="#6a6a6a"/><stop offset="1" stop-color="#747474"/></linearGradient>
<linearGradient id="sl" x1="0" x2="1" y1="0" y2="1"><stop offset="0" stop-color="#696d6d"/><stop offset="0.5" stop-color="#828686"/><stop offset="1" stop-color="#6b6f6f"/></linearGradient>
<filter id="tx" x="0" y="0" width="100%" height="100%" filterUnits="objectBoundingBox" color-interpolation-filters="sRGB">
<feTurbulence type="fractalNoise" baseFrequency="0.7 0.02" numOctaves="2" seed="7" result="n"/>
<feColorMatrix in="n" type="matrix" values="0.35 0 0 0 0.325  0.35 0 0 0 0.325  0.35 0 0 0 0.325  0 0 0 0 1" result="g"/>
<feBlend in="g" in2="SourceGraphic" mode="soft-light" result="b"/>
<feComposite in="b" in2="SourceAlpha" operator="in"/>
</filter>
</defs>
<polygon points="1146,631 1175,626 1186,642 1158,648" fill="#d2d2d6" stroke="#8a8a8a" stroke-width="2" stroke-linejoin="round"/>
<polygon points="1165,660 1190,655 1212,680 1185,687" fill="#d2d2d6" stroke="#8a8a8a" stroke-width="2" stroke-linejoin="round"/>
<polygon points="1234,761 1292,752 1314,789 1264,804" fill="#d2d2d6" stroke="#8a8a8a" stroke-width="2" stroke-linejoin="round"/>
<polygon points="1411,766 1455,745 1478,771 1430,784" fill="#d2d2d6" stroke="#8a8a8a" stroke-width="2" stroke-linejoin="round"/>
<polygon points="1519,726 1560,718 1576,746 1544,754" fill="#d2d2d6" stroke="#8a8a8a" stroke-width="2" stroke-linejoin="round"/>
<polygon points="1632,688 1661,681 1717,709 1685,720" fill="#d2d2d6" stroke="#8a8a8a" stroke-width="2" stroke-linejoin="round"/>
<polygon points="1541,770 1609,746 1635,759 1584,791" fill="#d2d2d6" stroke="#8a8a8a" stroke-width="2" stroke-linejoin="round"/>
<polygon points="1442,829 1520,797 1548,814 1485,854" fill="#d2d2d6" stroke="#8a8a8a" stroke-width="2" stroke-linejoin="round"/>
<polygon points="1317,885 1384,864 1417,905 1348,930" fill="#d2d2d6" stroke="#8a8a8a" stroke-width="2" stroke-linejoin="round"/>
<g filter="url(#tx)"><polygon points="1165,618 1170.4,618.0 1170.95,640 1166,634" fill="#8a8a8a" stroke="#8a8a8a" stroke-width="1.2" stroke-linejoin="round"/><polygon points="1170.4,618.0 1177,618 1177,636 1170.95,640" fill="url(#cd)" stroke="url(#cd)" stroke-width="1.2" stroke-linejoin="round"/></g>
<g filter="url(#tx)"><polygon points="1186,640 1193.2,640.0 1193.75,678 1187,672" fill="#8a8a8a" stroke="#8a8a8a" stroke-width="1.2" stroke-linejoin="round"/><polygon points="1193.2,640.0 1202,640 1202,674 1193.75,678" fill="url(#cd)" stroke="url(#cd)" stroke-width="1.2" stroke-linejoin="round"/></g>
<g filter="url(#tx)"><polygon points="1261,740 1272.5,740.0 1273.0,788 1262,780" fill="#8a8a8a" stroke="#8a8a8a" stroke-width="1.2" stroke-linejoin="round"/><polygon points="1272.5,740.0 1284,740 1284,784 1273.0,788" fill="url(#cd)" stroke="url(#cd)" stroke-width="1.2" stroke-linejoin="round"/></g>
<g filter="url(#tx)"><polygon points="1430,740 1438.8,740.0 1439.4,770 1431,764" fill="#8a8a8a" stroke="#8a8a8a" stroke-width="1.2" stroke-linejoin="round"/><polygon points="1438.8,740.0 1452,740 1452,766 1439.4,770" fill="url(#cd)" stroke="url(#cd)" stroke-width="1.2" stroke-linejoin="round"/></g>
<g filter="url(#tx)"><polygon points="1540,690 1548.8,690.0 1549.4,742 1541,736" fill="#8a8a8a" stroke="#8a8a8a" stroke-width="1.2" stroke-linejoin="round"/><polygon points="1548.8,690.0 1562,690 1562,738 1549.4,742" fill="url(#cd)" stroke="url(#cd)" stroke-width="1.2" stroke-linejoin="round"/></g>
<polygon points="1135,572 1186,566 1192,566 1192,500 1345,585 1520,556 1619,538 1672,568 1697,597 1697,615 1609,660 1586,676 1520,708 1487,727 1412,767 1380,782 1341,778 1337,745 1280,762" fill="url(#sl)" stroke="url(#sl)" stroke-width="1.2" stroke-linejoin="round"/>
<polygon points="1135,572 1280,762 1280,765 1135,575" fill="#5e6262" stroke="#5e6262" stroke-width="1.2" stroke-linejoin="round"/>
<polygon points="1280,762 1337,745 1337,749 1280,765" fill="#7c8080" stroke="#7c8080" stroke-width="1.2" stroke-linejoin="round"/>
<polygon points="1619,541 1672,568 1695,599 1609,642" fill="#6e7272" stroke="#6e7272" stroke-width="1.2" stroke-linejoin="round"/>
<path d="M1197 577L1337 740M1290 600L1341 660" stroke="#5f6363" stroke-width="1" fill="none" opacity="0.7"/>
<polygon points="1377,752 1487,703 1487,728 1440,752 1412,767 1377,782" fill="#686868" stroke="#686868" stroke-width="1.2" stroke-linejoin="round"/><line x1="1377" y1="754.4" x2="1487" y2="705.0" stroke="#808080" stroke-width="2.2"/><line x1="1377" y1="761.0" x2="1487" y2="710.5" stroke="#5a5a5a" stroke-width="1.2"/><line x1="1377" y1="765.5" x2="1487" y2="714.2" stroke="#727272" stroke-width="1.2"/><line x1="1377" y1="770.0" x2="1487" y2="718.0" stroke="#565656" stroke-width="1.2"/><line x1="1377" y1="775.4" x2="1487" y2="722.5" stroke="#6e6e6e" stroke-width="1.2"/>
<polygon points="1518,686 1586,656 1586,677 1550,693 1518,711" fill="#686868" stroke="#686868" stroke-width="1.2" stroke-linejoin="round"/><line x1="1518" y1="688.0" x2="1586" y2="657.7" stroke="#808080" stroke-width="2.2"/><line x1="1518" y1="693.5" x2="1586" y2="662.3" stroke="#5a5a5a" stroke-width="1.2"/><line x1="1518" y1="697.2" x2="1586" y2="665.5" stroke="#727272" stroke-width="1.2"/><line x1="1518" y1="701.0" x2="1586" y2="668.6" stroke="#565656" stroke-width="1.2"/><line x1="1518" y1="705.5" x2="1586" y2="672.4" stroke="#6e6e6e" stroke-width="1.2"/>
<polygon points="1607,643 1695,599 1695,619 1607,663" fill="#686868" stroke="#686868" stroke-width="1.2" stroke-linejoin="round"/><line x1="1607" y1="644.6" x2="1695" y2="600.6" stroke="#808080" stroke-width="2.2"/><line x1="1607" y1="649.0" x2="1695" y2="605.0" stroke="#5a5a5a" stroke-width="1.2"/><line x1="1607" y1="652.0" x2="1695" y2="608.0" stroke="#727272" stroke-width="1.2"/><line x1="1607" y1="655.0" x2="1695" y2="611.0" stroke="#565656" stroke-width="1.2"/><line x1="1607" y1="658.6" x2="1695" y2="614.6" stroke="#6e6e6e" stroke-width="1.2"/>
<polygon points="1160,546 1177,550 1177,568 1160,566" fill="#888888" stroke="#888888" stroke-width="1.2" stroke-linejoin="round"/>
<g filter="url(#tx)"><polygon points="1154,480 1159.4,483.3 1162.2,571 1158,565" fill="#707070" stroke="#707070" stroke-width="1.2" stroke-linejoin="round"/><polygon points="1159.4,483.3 1172,491 1172,567 1162.2,571" fill="url(#cd)" stroke="url(#cd)" stroke-width="1.2" stroke-linejoin="round"/></g>
<g filter="url(#tx)"><polygon points="1175,493 1182.65,497.5 1184.3,574 1178,568" fill="#8a8a8a" stroke="#8a8a8a" stroke-width="1.2" stroke-linejoin="round"/><polygon points="1182.65,497.5 1192,503 1192,570 1184.3,574" fill="url(#cd)" stroke="url(#cd)" stroke-width="1.2" stroke-linejoin="round"/></g>
<g filter="url(#tx)"><polygon points="1250,592 1265.5,599.44 1266.26,664 1252,652" fill="#8a8a8a" stroke="#8a8a8a" stroke-width="1.2" stroke-linejoin="round"/><polygon points="1265.5,599.44 1275,604 1275,660 1266.26,664" fill="url(#cd)" stroke="url(#cd)" stroke-width="1.2" stroke-linejoin="round"/></g>
<g filter="url(#tx)"><polygon points="1430,598 1439.6,598.0 1440.2,651 1431,643" fill="#8a8a8a" stroke="#8a8a8a" stroke-width="1.2" stroke-linejoin="round"/><polygon points="1439.6,598.0 1454,598 1454,647 1440.2,651" fill="url(#cd)" stroke="url(#cd)" stroke-width="1.2" stroke-linejoin="round"/></g>
<g filter="url(#tx)"><polygon points="1545,557 1555.4,557.0 1556.0,626 1546,618" fill="#8a8a8a" stroke="#8a8a8a" stroke-width="1.2" stroke-linejoin="round"/><polygon points="1555.4,557.0 1571,557 1571,622 1556.0,626" fill="url(#cd)" stroke="url(#cd)" stroke-width="1.2" stroke-linejoin="round"/></g>
<polygon points="1123,465 1173,459 1185,458 1185,440 1240,436 1330,425 1530,415 1627,430 1681,459 1706,480 1706,502 1621,533 1595,547 1520,575 1490,587 1375,625 1341,627 1337,594" fill="url(#sl)" stroke="url(#sl)" stroke-width="1.2" stroke-linejoin="round"/>
<polygon points="1123,465 1337,594 1337,597 1123,468" fill="#626666" stroke="#626666" stroke-width="1.2" stroke-linejoin="round"/>
<path d="M1190 473L1340 582M1240 437L1341 500M1330 426L1430 470" stroke="#5f6363" stroke-width="1" fill="none" opacity="0.7"/>
<polygon points="1375,595 1490,557 1490,587 1375,625" fill="#686868" stroke="#686868" stroke-width="1.2" stroke-linejoin="round"/><line x1="1375" y1="597.4" x2="1490" y2="559.4" stroke="#808080" stroke-width="2.2"/><line x1="1375" y1="604.0" x2="1490" y2="566.0" stroke="#5a5a5a" stroke-width="1.2"/><line x1="1375" y1="608.5" x2="1490" y2="570.5" stroke="#727272" stroke-width="1.2"/><line x1="1375" y1="613.0" x2="1490" y2="575.0" stroke="#565656" stroke-width="1.2"/><line x1="1375" y1="618.4" x2="1490" y2="580.4" stroke="#6e6e6e" stroke-width="1.2"/>
<polygon points="1520,545 1595,520 1595,547 1520,575" fill="#686868" stroke="#686868" stroke-width="1.2" stroke-linejoin="round"/><line x1="1520" y1="547.4" x2="1595" y2="522.2" stroke="#808080" stroke-width="2.2"/><line x1="1520" y1="554.0" x2="1595" y2="528.1" stroke="#5a5a5a" stroke-width="1.2"/><line x1="1520" y1="558.5" x2="1595" y2="532.1" stroke="#727272" stroke-width="1.2"/><line x1="1520" y1="563.0" x2="1595" y2="536.2" stroke="#565656" stroke-width="1.2"/><line x1="1520" y1="568.4" x2="1595" y2="541.1" stroke="#6e6e6e" stroke-width="1.2"/>
<polygon points="1621,514 1706,480 1706,502 1621,533" fill="#686868" stroke="#686868" stroke-width="1.2" stroke-linejoin="round"/><line x1="1621" y1="515.5" x2="1706" y2="481.8" stroke="#808080" stroke-width="2.2"/><line x1="1621" y1="519.7" x2="1706" y2="486.6" stroke="#5a5a5a" stroke-width="1.2"/><line x1="1621" y1="522.5" x2="1706" y2="489.9" stroke="#727272" stroke-width="1.2"/><line x1="1621" y1="525.4" x2="1706" y2="493.2" stroke="#565656" stroke-width="1.2"/><line x1="1621" y1="528.8" x2="1706" y2="497.2" stroke="#6e6e6e" stroke-width="1.2"/>
<polygon points="1706,470 1720,471 1720,476 1706,478" fill="#8a9090" stroke="#8a9090" stroke-width="1.2" stroke-linejoin="round"/>
<polygon points="1315,596 1341,590 1341,622 1330,612" fill="#888888" stroke="#888888" stroke-width="1.2" stroke-linejoin="round"/>
<polygon points="1621,534 1674,514 1671,568 1619,541" fill="#fff" />
<polygon points="1152,446 1168,452 1168,462 1152,458" fill="#8c8c8c" stroke="#8c8c8c" stroke-width="1.2" stroke-linejoin="round"/>
<g filter="url(#tx)"><polygon points="1142,378 1148.0,381.3 1151.4,452 1146,448" fill="#8a8a8a" stroke="#8a8a8a" stroke-width="1.2" stroke-linejoin="round"/><polygon points="1148.0,381.3 1162,389 1164,446 1151.4,452" fill="url(#cd)" stroke="url(#cd)" stroke-width="1.2" stroke-linejoin="round"/></g>
<g filter="url(#tx)"><polygon points="1164,390 1173.0,394.95 1176.1,462 1168,455" fill="#8a8a8a" stroke="#8a8a8a" stroke-width="1.2" stroke-linejoin="round"/><polygon points="1173.0,394.95 1184,401 1186,458 1176.1,462" fill="url(#cd)" stroke="url(#cd)" stroke-width="1.2" stroke-linejoin="round"/></g>
<g filter="url(#tx)"><polygon points="1240,440 1255.0,442.0 1256.5,530 1243,520" fill="#8a8a8a" stroke="#8a8a8a" stroke-width="1.2" stroke-linejoin="round"/><polygon points="1255.0,442.0 1270,444 1270,526 1256.5,530" fill="url(#cd)" stroke="url(#cd)" stroke-width="1.2" stroke-linejoin="round"/></g>
<g filter="url(#tx)"><polygon points="1417,420 1422.2,420.0 1422.8,451 1418,445" fill="#8a8a8a" stroke="#8a8a8a" stroke-width="1.2" stroke-linejoin="round"/><polygon points="1422.2,420.0 1430,420 1430,447 1422.8,451" fill="url(#cd)" stroke="url(#cd)" stroke-width="1.2" stroke-linejoin="round"/></g>
<g filter="url(#tx)"><polygon points="1430,410 1440.4,410.0 1441.0,521 1431,513" fill="#8a8a8a" stroke="#8a8a8a" stroke-width="1.2" stroke-linejoin="round"/><polygon points="1440.4,410.0 1456,410 1456,517 1441.0,521" fill="url(#cd)" stroke="url(#cd)" stroke-width="1.2" stroke-linejoin="round"/></g>
<g filter="url(#tx)"><polygon points="1462,390 1468.0,390.0 1468.6,414 1463,408" fill="#8a8a8a" stroke="#8a8a8a" stroke-width="1.2" stroke-linejoin="round"/><polygon points="1468.0,390.0 1477,390 1477,410 1468.6,414" fill="url(#cd)" stroke="url(#cd)" stroke-width="1.2" stroke-linejoin="round"/></g>
<g filter="url(#tx)"><polygon points="1540,357 1563.1,357.0 1566.5,504 1550,496" fill="#8a8a8a" stroke="#8a8a8a" stroke-width="1.2" stroke-linejoin="round"/><polygon points="1563.1,357.0 1582,357 1580,500 1566.5,504" fill="url(#cd)" stroke="url(#cd)" stroke-width="1.2" stroke-linejoin="round"/></g>
<g filter="url(#tx)"><polygon points="1690,395 1695.0,395.0 1695.0,474 1690,470" fill="#8a8a8a" stroke="#8a8a8a" stroke-width="1.2" stroke-linejoin="round"/><polygon points="1695.0,395.0 1700,395 1700,470 1695.0,474" fill="url(#cd)" stroke="url(#cd)" stroke-width="1.2" stroke-linejoin="round"/></g>
<polygon points="1184,400 1240,437 1186,440" fill="#fff" />
<polygon points="1530,362 1541,360 1545,420 1530,415" fill="#fff" />
<polygon points="1582,357 1592,355 1590,425 1582,422" fill="#fff" />
<polygon points="1632,352 1687,372 1681,459 1627,430" fill="#fff" />
<polygon points="1265,290 1299,290 1299,296 1265,296" fill="#4a4a4a" stroke="#4a4a4a" stroke-width="1.2" stroke-linejoin="round"/>
<polygon points="1137,334 1148,333 1148,336 1137,337" fill="#585858" stroke="#585858" stroke-width="1.2" stroke-linejoin="round"/>
<polygon points="1137.5,336 1151,339 1151,350 1138.5,347" fill="#8c8c8c" stroke="#8c8c8c" stroke-width="1.2" stroke-linejoin="round"/>
<polygon points="1114,360 1157,347 1141,339 1265,294 1358,291 1617,324 1620,345 1515,358 1375,440 1337,445 1326,417 1255,445" fill="#6c7070" stroke="#6c7070" stroke-width="1.2" stroke-linejoin="round"/>
<polygon points="1140,338 1265,294 1358,291 1617,324 1512,340 1368,419 1337,417" fill="url(#sl)" stroke="url(#sl)" stroke-width="1.2" stroke-linejoin="round"/>
<polygon points="1358,291 1617,324 1512,340 1435,327" fill="#696d6d" stroke="#696d6d" stroke-width="1.2" stroke-linejoin="round"/>
<polygon points="1365,417 1435,327 1512,340" fill="#757979" stroke="#757979" stroke-width="1.2" stroke-linejoin="round"/>
<polygon points="1157,346 1290,301 1291,302 1159,347" fill="#7c8080" stroke="#7c8080" stroke-width="1.2" stroke-linejoin="round"/>
<polygon points="1352,290 1368,289 1370,293 1353,294" fill="#5e5e5e" stroke="#5e5e5e" stroke-width="1.2" stroke-linejoin="round"/>
<polygon points="1425,298 1439,297 1441,301 1426,302" fill="#5e5e5e" stroke="#5e5e5e" stroke-width="1.2" stroke-linejoin="round"/>
<polygon points="1487,307 1501,306 1503,310 1488,311" fill="#5e5e5e" stroke="#5e5e5e" stroke-width="1.2" stroke-linejoin="round"/>
<polygon points="1560,315 1574,314 1576,318 1561,319" fill="#5e5e5e" stroke="#5e5e5e" stroke-width="1.2" stroke-linejoin="round"/>
<polygon points="1335,309 1345,308 1347,312 1336,313" fill="#5e5e5e" stroke="#5e5e5e" stroke-width="1.2" stroke-linejoin="round"/>
<polygon points="1430,325 1444,324 1446,328 1431,329" fill="#5e5e5e" stroke="#5e5e5e" stroke-width="1.2" stroke-linejoin="round"/>
<polygon points="1157,346 1112,360 1255,443 1326,415" fill="#6b6f6f" stroke="#6b6f6f" stroke-width="1.2" stroke-linejoin="round"/>
<polygon points="1112,360 1255,443 1255,447 1112,364" fill="#5c6060" stroke="#5c6060" stroke-width="1.2" stroke-linejoin="round"/>
<polygon points="1255,443 1326,415 1326,419 1255,447" fill="#808484" stroke="#808484" stroke-width="1.2" stroke-linejoin="round"/>
<polygon points="1300,428 1337,416 1337,450 1315,440" fill="#8a8a8a" stroke="#8a8a8a" stroke-width="1.2" stroke-linejoin="round"/>
<g filter="url(#tx)">
<polygon points="1687,371 1716,377 1686,708 1660,692" fill="url(#cD)" stroke="url(#cD)" stroke-width="1.2" stroke-linejoin="round"/>
<polygon points="1716,377 1724,378 1694,696 1686,708" fill="#4a4a4a" stroke="#4a4a4a" stroke-width="1.2" stroke-linejoin="round"/>
<polygon points="1596,340 1606,340 1580,776 1572,772" fill="#8c8c8c" stroke="#8c8c8c" stroke-width="1.2" stroke-linejoin="round"/>
<polygon points="1606,335 1633,340 1605,760 1580,776" fill="url(#cB)" stroke="url(#cB)" stroke-width="1.2" stroke-linejoin="round"/>
<polygon points="1481,352 1494.5,345 1490,520 1487,740 1484.5,833 1477.5,830 1480,740 1482,520" fill="#929292" stroke="#929292" stroke-width="1.2" stroke-linejoin="round"/>
<polygon points="1494.5,345 1514,340 1531,362 1516,816 1484.5,833 1487,740 1490,520" fill="url(#cB)" stroke="url(#cB)" stroke-width="1.2" stroke-linejoin="round"/>
<polygon points="1337,416 1350,418 1361,905 1352,895" fill="#888888" stroke="#888888" stroke-width="1.2" stroke-linejoin="round"/>
<polygon points="1350,418 1372,420 1380,896 1361,905" fill="url(#cd)" stroke="url(#cd)" stroke-width="1.2" stroke-linejoin="round"/>
</g>
<polygon points="1372.5,419 1514,340 1514,362 1470,392 1372.5,446" fill="#767676" stroke="#767676" stroke-width="1.2" stroke-linejoin="round"/><line x1="1372.5" y1="421.2" x2="1514" y2="341.8" stroke="#808080" stroke-width="2.2"/><line x1="1372.5" y1="427.1" x2="1514" y2="346.6" stroke="#5a5a5a" stroke-width="1.2"/><line x1="1372.5" y1="431.1" x2="1514" y2="349.9" stroke="#727272" stroke-width="1.2"/><line x1="1372.5" y1="435.2" x2="1514" y2="353.2" stroke="#565656" stroke-width="1.2"/><line x1="1372.5" y1="440.1" x2="1514" y2="357.2" stroke="#6e6e6e" stroke-width="1.2"/>
<polygon points="1366,416 1490,349 1491,351 1369,419" fill="#8a8a8a" stroke="#8a8a8a" stroke-width="1.2" stroke-linejoin="round"/>
<polygon points="1514,340 1622,324 1622,348 1607,349 1565,355 1514,362" fill="#6a6a6a" stroke="#6a6a6a" stroke-width="1.2" stroke-linejoin="round"/><line x1="1514" y1="341.8" x2="1622" y2="325.9" stroke="#808080" stroke-width="2.2"/><line x1="1514" y1="346.6" x2="1622" y2="331.2" stroke="#5a5a5a" stroke-width="1.2"/><line x1="1514" y1="349.9" x2="1622" y2="334.8" stroke="#727272" stroke-width="1.2"/><line x1="1514" y1="353.2" x2="1622" y2="338.4" stroke="#565656" stroke-width="1.2"/><line x1="1514" y1="357.2" x2="1622" y2="342.7" stroke="#6e6e6e" stroke-width="1.2"/>
<polygon points="1622,324 1726,357 1726,378 1622,352" fill="#6a6a6a" stroke="#6a6a6a" stroke-width="1.2" stroke-linejoin="round"/><line x1="1622" y1="326.2" x2="1726" y2="358.7" stroke="#808080" stroke-width="2.2"/><line x1="1622" y1="332.4" x2="1726" y2="363.3" stroke="#5a5a5a" stroke-width="1.2"/><line x1="1622" y1="336.6" x2="1726" y2="366.4" stroke="#727272" stroke-width="1.2"/><line x1="1622" y1="340.8" x2="1726" y2="369.6" stroke="#565656" stroke-width="1.2"/><line x1="1622" y1="345.8" x2="1726" y2="373.4" stroke="#6e6e6e" stroke-width="1.2"/>
<polygon points="1634,354 1689,373 1687,381 1636,364" fill="#909090" stroke="#909090" stroke-width="1.2" stroke-linejoin="round"/>
<polygon points="1726,362 1731,363 1731,369 1726,369" fill="#8a9090" stroke="#8a9090" stroke-width="1.2" stroke-linejoin="round"/>
<polygon points="1487,339 1496,339 1496,349 1487,350" fill="#909090" stroke="#909090" stroke-width="1.2" stroke-linejoin="round"/>
<polygon points="1496,339 1512,339 1512,342 1496,349" fill="#5e5e5e" stroke="#5e5e5e" stroke-width="1.2" stroke-linejoin="round"/>
<polygon points="1615,321 1626,321 1626,327 1615,327" fill="#9a9a9a" stroke="#9a9a9a" stroke-width="1.2" stroke-linejoin="round"/>
<polygon points="1626,321 1636,323 1636,328 1626,327" fill="#6a6a6a" stroke="#6a6a6a" stroke-width="1.2" stroke-linejoin="round"/>
<polygon points="1337.6,583.8 1343,583.1 1343,587.5 1348.4,590.2 1349.1,627.3 1339,619.5" fill="#ff0000" stroke="#ff0000" stroke-width="1.2" stroke-linejoin="round"/>
<polygon points="1365.3,595.3 1371,594.3 1371,599.6 1374,600.3 1374,628.6 1365.9,631" fill="#e60000" stroke="#e60000" stroke-width="1.2" stroke-linejoin="round"/>
<polygon points="1375,585.8 1384.1,589.2 1384.5,596 1375,599" fill="#ff0000" stroke="#ff0000" stroke-width="1.2" stroke-linejoin="round"/>
<path d="M1376.4 599.6V627.3L1384.8 624.2" stroke="#ff0000" stroke-width="1" fill="none"/>
<polygon points="1342.5,740 1347.5,741 1347.5,746 1353.7,751 1353.7,782.5 1343.7,772.5" fill="#ff0000" stroke="#ff0000" stroke-width="1.2" stroke-linejoin="round"/>
<polygon points="1368.7,755 1375,752.5 1375,760 1378.7,761 1378.7,783.7 1369.5,787" fill="#e60000" stroke="#e60000" stroke-width="1.2" stroke-linejoin="round"/>
<polygon points="1377.5,742.5 1386,747.5 1386,753.7 1377.5,757.5" fill="#ff0000" stroke="#ff0000" stroke-width="1.2" stroke-linejoin="round"/>
<path d="M1379.5 761V782.5L1386 778.7" stroke="#ff0000" stroke-width="1" fill="none"/>
<polygon points="1472,553 1483.2,551 1488,553 1488,559 1476.8,560 1472,558" fill="#008c00" stroke="#008c00" stroke-width="1.2" stroke-linejoin="round"/><polygon points="1472,553 1483.2,551 1488,553 1476.8,555" fill="#18b018" stroke="#18b018" stroke-width="1.2" stroke-linejoin="round"/>
<polygon points="1490,552 1497,550 1497,584 1490,587" fill="#008a00" stroke="#008a00" stroke-width="1.2" stroke-linejoin="round"/>
<polygon points="1520,541 1531,538 1531,570 1520,575" fill="#10a010" stroke="#10a010" stroke-width="1.2" stroke-linejoin="round"/>
<polygon points="1516.5,545 1520,544 1520,575 1516.5,577" fill="#ff0000" stroke="#ff0000" stroke-width="1.2" stroke-linejoin="round"/>
<polygon points="1469,697 1480.2,695 1485,697 1485,703 1473.8,704 1469,702" fill="#008c00" stroke="#008c00" stroke-width="1.2" stroke-linejoin="round"/><polygon points="1469,697 1480.2,695 1485,697 1473.8,699" fill="#18b018" stroke="#18b018" stroke-width="1.2" stroke-linejoin="round"/>
<polygon points="1487,702 1493,700 1493,726 1487,730" fill="#10a010" opacity="0.75"/>
<polygon points="1514,680 1526,676 1526,708 1514,714" fill="#10a010" stroke="#10a010" stroke-width="1.2" stroke-linejoin="round"/>
<polygon points="1509,684 1515,682 1515,712 1509,715" fill="#ff0000" stroke="#ff0000" stroke-width="1.2" stroke-linejoin="round"/>
<polygon points="1579,519 1590.2,517 1595,519 1595,524 1583.8,525 1579,523" fill="#008c00" stroke="#008c00" stroke-width="1.2" stroke-linejoin="round"/><polygon points="1579,519 1590.2,517 1595,519 1583.8,521" fill="#18b018" stroke="#18b018" stroke-width="1.2" stroke-linejoin="round"/>
<polygon points="1594,522 1600,520 1600,546 1594,549" fill="#008a00" stroke="#008a00" stroke-width="1.2" stroke-linejoin="round"/>
<polygon points="1611,514 1616,512 1616,540 1611,542" fill="#ff0000" stroke="#ff0000" stroke-width="1.2" stroke-linejoin="round"/>
<polygon points="1572,649 1581.8,647 1586,649 1586,654 1576.2,655 1572,653" fill="#008c00" stroke="#008c00" stroke-width="1.2" stroke-linejoin="round"/><polygon points="1572,649 1581.8,647 1586,649 1576.2,651" fill="#18b018" stroke="#18b018" stroke-width="1.2" stroke-linejoin="round"/>
<polygon points="1586,654 1592,652 1592,676 1586,680" fill="#008a00" stroke="#008a00" stroke-width="1.2" stroke-linejoin="round"/>
<polygon points="1600,644 1607,641 1607,666 1600,669" fill="#ff0000" stroke="#ff0000" stroke-width="1.2" stroke-linejoin="round"/>
<polygon points="1607,640 1611,638 1611,662 1607,664" fill="#10a010" stroke="#10a010" stroke-width="1.2" stroke-linejoin="round"/>
<polygon points="1612,634 1617,633 1617,640 1612,641" fill="#10a010" stroke="#10a010" stroke-width="1.2" stroke-linejoin="round"/>
<polygon points="1620,508 1626,507 1626,514 1620,515" fill="#10a010" stroke="#10a010" stroke-width="1.2" stroke-linejoin="round"/>
<polygon points="1673,469 1681.4,467 1685,469 1685,475 1676.6,476 1673,474" fill="#008c00" stroke="#008c00" stroke-width="1.2" stroke-linejoin="round"/><polygon points="1673,469 1681.4,467 1685,469 1676.6,471" fill="#18b018" stroke="#18b018" stroke-width="1.2" stroke-linejoin="round"/>
<polygon points="1694,480 1703.8,478 1708,480 1708,486 1698.2,487 1694,485" fill="#e80000" stroke="#e80000" stroke-width="1.2" stroke-linejoin="round"/><polygon points="1694,480 1703.8,478 1708,480 1698.2,482" fill="#ff2a2a" stroke="#ff2a2a" stroke-width="1.2" stroke-linejoin="round"/>
<polygon points="1704,484 1708,484 1706,505 1703,505" fill="#ff0000" stroke="#ff0000" stroke-width="1.2" stroke-linejoin="round"/>
<polygon points="1663,583 1671.4,581 1675,583 1675,589 1666.6,590 1663,588" fill="#008c00" stroke="#008c00" stroke-width="1.2" stroke-linejoin="round"/><polygon points="1663,583 1671.4,581 1675,583 1666.6,585" fill="#18b018" stroke="#18b018" stroke-width="1.2" stroke-linejoin="round"/>
<polygon points="1683,595 1692.8,593 1697,595 1697,601 1687.2,602 1683,600" fill="#e80000" stroke="#e80000" stroke-width="1.2" stroke-linejoin="round"/><polygon points="1683,595 1692.8,593 1697,595 1687.2,597" fill="#ff2a2a" stroke="#ff2a2a" stroke-width="1.2" stroke-linejoin="round"/>
<polygon points="1694,600 1698,600 1696,618 1693,618" fill="#ff0000" stroke="#ff0000" stroke-width="1.2" stroke-linejoin="round"/>
<polygon points="1287,439 1293.3,437 1296,439 1296,443 1289.7,444 1287,442" fill="#e80000" stroke="#e80000" stroke-width="1.2" stroke-linejoin="round"/><polygon points="1287,439 1293.3,437 1296,439 1289.7,441" fill="#ff2a2a" stroke="#ff2a2a" stroke-width="1.2" stroke-linejoin="round"/>
<polygon points="1304,443 1312.4,441 1316,443 1316,447 1307.6,448 1304,446" fill="#e80000" stroke="#e80000" stroke-width="1.2" stroke-linejoin="round"/><polygon points="1304,443 1312.4,441 1316,443 1307.6,445" fill="#ff2a2a" stroke="#ff2a2a" stroke-width="1.2" stroke-linejoin="round"/>
<polygon points="1151,443 1158.0,441 1161,443 1161,446 1154.0,447 1151,445" fill="#e80000" stroke="#e80000" stroke-width="1.2" stroke-linejoin="round"/><polygon points="1151,443 1158.0,441 1161,443 1154.0,445" fill="#ff2a2a" stroke="#ff2a2a" stroke-width="1.2" stroke-linejoin="round"/>
<polygon points="1151,446 1154,446 1155,458 1152,458" fill="#ff0000" stroke="#ff0000" stroke-width="1.2" stroke-linejoin="round"/>
<polygon points="1174,462 1183.8,460 1188,462 1188,468 1178.2,469 1174,467" fill="#008c00" stroke="#008c00" stroke-width="1.2" stroke-linejoin="round"/><polygon points="1174,462 1183.8,460 1188,462 1178.2,464" fill="#18b018" stroke="#18b018" stroke-width="1.2" stroke-linejoin="round"/>
<polygon points="1256,523 1268.6,521 1274,523 1274,531 1261.4,532 1256,530" fill="#008c00" stroke="#008c00" stroke-width="1.2" stroke-linejoin="round"/><polygon points="1256,523 1268.6,521 1274,523 1261.4,525" fill="#18b018" stroke="#18b018" stroke-width="1.2" stroke-linejoin="round"/>
<polygon points="1241,509 1247,512 1247,522 1241,518" fill="#00a000" stroke="#00a000" stroke-width="1.2" stroke-linejoin="round"/>
<polygon points="1446,514 1456.5,512 1461,514 1461,520 1450.5,521 1446,519" fill="#e80000" stroke="#e80000" stroke-width="1.2" stroke-linejoin="round"/><polygon points="1446,514 1456.5,512 1461,514 1450.5,516" fill="#ff2a2a" stroke="#ff2a2a" stroke-width="1.2" stroke-linejoin="round"/>
<polygon points="1566,499 1576.5,497 1581,499 1581,504 1570.5,505 1566,503" fill="#e80000" stroke="#e80000" stroke-width="1.2" stroke-linejoin="round"/><polygon points="1566,499 1576.5,497 1581,499 1570.5,501" fill="#ff2a2a" stroke="#ff2a2a" stroke-width="1.2" stroke-linejoin="round"/>
<polygon points="1457,410 1470,410 1470,414 1457,414" fill="#008a00" stroke="#008a00" stroke-width="1.2" stroke-linejoin="round"/>
<polygon points="1470,413 1477.0,411 1480,413 1480,418 1473.0,419 1470,417" fill="#e80000" stroke="#e80000" stroke-width="1.2" stroke-linejoin="round"/><polygon points="1470,413 1477.0,411 1480,413 1473.0,415" fill="#ff2a2a" stroke="#ff2a2a" stroke-width="1.2" stroke-linejoin="round"/>
<polygon points="1536,427 1540,427 1540,433 1536,433" fill="#00a000" stroke="#00a000" stroke-width="1.2" stroke-linejoin="round"/>
<polygon points="1808,2 1808.0,0 1808,2 1808,0 1808.0,1 1808,-1" fill="#e80000" stroke="#e80000" stroke-width="1.2" stroke-linejoin="round"/><polygon points="1808,2 1808.0,0 1808,2 1808.0,4" fill="#ff2a2a" stroke="#ff2a2a" stroke-width="1.2" stroke-linejoin="round"/>
<polygon points="1159,543 1166.0,541 1169,543 1169,546 1162.0,547 1159,545" fill="#e80000" stroke="#e80000" stroke-width="1.2" stroke-linejoin="round"/><polygon points="1159,543 1166.0,541 1169,543 1162.0,545" fill="#ff2a2a" stroke="#ff2a2a" stroke-width="1.2" stroke-linejoin="round"/>
<polygon points="1159,546 1163,546 1164,565 1161,565" fill="#ff0000" stroke="#ff0000" stroke-width="1.2" stroke-linejoin="round"/>
<polygon points="1184,569 1193.8,567 1198,569 1198,576 1188.2,577 1184,575" fill="#008c00" stroke="#008c00" stroke-width="1.2" stroke-linejoin="round"/><polygon points="1184,569 1193.8,567 1198,569 1188.2,571" fill="#18b018" stroke="#18b018" stroke-width="1.2" stroke-linejoin="round"/>
<polygon points="1265,657 1277.6,655 1283,657 1283,666 1270.4,667 1265,665" fill="#008c00" stroke="#008c00" stroke-width="1.2" stroke-linejoin="round"/><polygon points="1265,657 1277.6,655 1283,657 1270.4,659" fill="#18b018" stroke="#18b018" stroke-width="1.2" stroke-linejoin="round"/>
<polygon points="1249,638 1256,642 1256,652 1249,648" fill="#00a000" stroke="#00a000" stroke-width="1.2" stroke-linejoin="round"/>
<polygon points="1446,643 1456.5,641 1461,643 1461,649 1450.5,650 1446,648" fill="#e80000" stroke="#e80000" stroke-width="1.2" stroke-linejoin="round"/><polygon points="1446,643 1456.5,641 1461,643 1450.5,645" fill="#ff2a2a" stroke="#ff2a2a" stroke-width="1.2" stroke-linejoin="round"/>
<polygon points="1560,620 1570.5,618 1575,620 1575,626 1564.5,627 1560,625" fill="#e80000" stroke="#e80000" stroke-width="1.2" stroke-linejoin="round"/><polygon points="1560,620 1570.5,618 1575,620 1564.5,622" fill="#ff2a2a" stroke="#ff2a2a" stroke-width="1.2" stroke-linejoin="round"/>
<polygon points="1805,2 1805.0,0 1805,2 1805,0 1805.0,1 1805,-1" fill="#e80000" stroke="#e80000" stroke-width="1.2" stroke-linejoin="round"/><polygon points="1805,2 1805.0,0 1805,2 1805.0,4" fill="#ff2a2a" stroke="#ff2a2a" stroke-width="1.2" stroke-linejoin="round"/>
</svg>
<svg width="0" height="0" style="position:absolute"><defs>
<linearGradient id="gFold" x1="0" y1="0" x2="1" y2="1"><stop offset="0" stop-color="#fff8c8"/><stop offset="0.6" stop-color="#ffe45a"/><stop offset="1" stop-color="#f2c21a"/></linearGradient>
<linearGradient id="gPage" x1="0" y1="0" x2="1" y2="1"><stop offset="0" stop-color="#ffffff"/><stop offset="1" stop-color="#cfe0f4"/></linearGradient>
<linearGradient id="gBlue" x1="0" y1="0" x2="1" y2="1"><stop offset="0" stop-color="#3f8ae8"/><stop offset="1" stop-color="#0b3fa6"/></linearGradient>
<linearGradient id="gGold" x1="0" y1="0" x2="1" y2="0"><stop offset="0" stop-color="#fff04a"/><stop offset="0.6" stop-color="#e8b000"/><stop offset="1" stop-color="#a87400"/></linearGradient>
<radialGradient id="gGreen" cx="0.4" cy="0.3" r="0.8"><stop offset="0" stop-color="#5fd04a"/><stop offset="0.6" stop-color="#22a01c"/><stop offset="1" stop-color="#0a6a10"/></radialGradient>
<radialGradient id="gRed" cx="0.35" cy="0.3" r="0.8"><stop offset="0" stop-color="#ff9a6a"/><stop offset="0.5" stop-color="#f03a10"/><stop offset="1" stop-color="#b81800"/></radialGradient>
<radialGradient id="gStar" cx="0.5" cy="0.5" r="0.5"><stop offset="0" stop-color="#fff27a"/><stop offset="0.45" stop-color="#ffb020"/><stop offset="0.75" stop-color="#f03010"/><stop offset="1" stop-color="#f03010" stop-opacity="0.2"/></radialGradient>
<radialGradient id="gGlobe" cx="0.4" cy="0.3" r="0.8"><stop offset="0" stop-color="#a8d8ff"/><stop offset="0.5" stop-color="#2a7be0"/><stop offset="1" stop-color="#0a3aa0"/></radialGradient>
<linearGradient id="gChipTop" x1="0" y1="1" x2="1" y2="0"><stop offset="0" stop-color="#a8a8a8"/><stop offset="0.5" stop-color="#6a6a6a"/><stop offset="1" stop-color="#8a8a8a"/></linearGradient>
<linearGradient id="gChip" x1="0" y1="0" x2="1" y2="1"><stop offset="0" stop-color="#9a9a9a"/><stop offset="0.5" stop-color="#5a5a5a"/><stop offset="1" stop-color="#3a3a3a"/></linearGradient>
<linearGradient id="gLav" x1="0" y1="0" x2="1" y2="1"><stop offset="0" stop-color="#eeeeff"/><stop offset="1" stop-color="#b4b4ec"/></linearGradient>
<linearGradient id="gCalc" x1="0" y1="0" x2="1" y2="1"><stop offset="0" stop-color="#7ec0ff"/><stop offset="1" stop-color="#2a7ae0"/></linearGradient>
<linearGradient id="gSilver" x1="0" y1="0" x2="1" y2="1"><stop offset="0" stop-color="#f4f4f4"/><stop offset="0.5" stop-color="#b8b8b8"/><stop offset="1" stop-color="#e8e8e8"/></linearGradient>
</defs></svg>
<svg class="a" style="left:16px;top:50px" width="32" height="32" viewBox="0 0 32 32"><path d="M2.5 2.5h10l4 4v17h-14z" fill="url(#gPage)" stroke="#3a5aa8"/><path d="M14.5 10.500h10l6 6v14h-16z" fill="url(#gPage)" stroke="#3a5aa8"/><path d="M24.5 10.500v6h6" fill="#b8cff0" stroke="#3a5aa8"/><circle cx="13" cy="12" r="7.5" fill="url(#gStar)"/><path d="M13 4.5L14.4 9.5L18.25 6.75L15.5 10.6L20.5 12L15.5 13.4L18.25 17.25L14.4 14.5L13 19.5L11.6 14.5L7.75 17.25L10.5 13.4L5.5 12L10.5 10.6L7.75 6.75L11.6 9.5z" fill="#ffd83a"/><circle cx="13" cy="12" r="2.2" fill="#fff6a0"/></svg>
<svg class="a" style="left:55px;top:50px" width="32" height="32" viewBox="0 0 32 32"><path d="M6 6l8-2.500l2 2.500l7-1.500l2 17l-15 4z" fill="url(#gFold)" stroke="#c89a18" stroke-width="0.9"/><path d="M2 10l9-2.500l2 2.500l9-2l3 17l-17 5z" fill="url(#gFold)" stroke="#c89a18" stroke-width="0.9"/><path d="M8 14l18-4.500l3.500 16l-19 5z" fill="url(#gFold)" stroke="#c89a18" stroke-width="0.9"/></svg>
<svg class="a" style="left:94px;top:50px" width="32" height="32" viewBox="0 0 32 32"><path d="M2.5 4.500q0-2 2-2h22.500q2 0 2 2v22.500q0 2-2 2h-22.500l-2-2z" fill="url(#gBlue)" stroke="#0a3a9a" stroke-width="0.8"/><rect x="7" y="3" width="18" height="13" fill="#f4f4f4"/><path d="M9.500 6h13M9.500 9h13M9.500 12h13" stroke="#c0c0c0" stroke-width="1.3"/><rect x="9" y="20" width="14" height="9" fill="#e8e8e8"/><rect x="11" y="21.500" width="4" height="6.500" fill="#1a55c0"/><rect x="25.500" y="4" width="1.600" height="1.600" fill="#0a2a80"/></svg>
<svg class="a" style="left:140px;top:50px" width="32" height="32" viewBox="0 0 32 32"><g transform="translate(1 3) scale(0.7)"><path d="M3 21.5l0-2.500l3.500-2.200l2 1.200z" fill="#8a8a8a" stroke="#5a5a5a" stroke-width="0.5"/><path d="M9.3 18.0l0-2.500l3.500-2.200l2 1.200z" fill="#8a8a8a" stroke="#5a5a5a" stroke-width="0.5"/><path d="M16.2 13.7l0-2.500l3.500-2.200l2 1.200z" fill="#8a8a8a" stroke="#5a5a5a" stroke-width="0.5"/><path d="M22.4 9.5l0-2.500l3.500-2.200l2 1.200z" fill="#8a8a8a" stroke="#5a5a5a" stroke-width="0.5"/><path d="M1.300 23.500L29 5L43.600 9.600L19 31.200z" fill="url(#gChipTop)" stroke="#4a4a4a" stroke-width="0.5"/><path d="M1.300 23.500L19 31.200V39.500L1.300 29.500z" fill="#6e6e6e" stroke="#3a3a3a" stroke-width="0.5"/><path d="M19 31.200L43.600 9.600V16L19 39.500z" fill="#3c3c3c"/><path d="M20.2 32.8l5-3v6.500l-2 1.200v2.500l-3 1.800z" fill="#e4e4e4" stroke="#6a6a6a" stroke-width="0.6"/><path d="M27.2 25.9l5-3v6.500l-2 1.200v2.500l-3 1.800z" fill="#e4e4e4" stroke="#6a6a6a" stroke-width="0.6"/><path d="M33.3 19.7l5-3v6.500l-2 1.200v2.500l-3 1.800z" fill="#e4e4e4" stroke="#6a6a6a" stroke-width="0.6"/><path d="M40.3 12.8l5-3v6.500l-2 1.200v2.500l-3 1.800z" fill="#e4e4e4" stroke="#6a6a6a" stroke-width="0.6"/></g><polygon points="16.5,8.2 16.5,9.8 14.2,10.5 13.7,11.6 14.9,13.7 13.7,14.9 11.6,13.7 10.5,14.2 9.8,16.5 8.2,16.5 7.5,14.2 6.4,13.7 4.3,14.9 3.1,13.7 4.3,11.6 3.8,10.5 1.5,9.8 1.5,8.2 3.8,7.5 4.3,6.4 3.1,4.3 4.3,3.1 6.4,4.3 7.5,3.8 8.2,1.5 9.8,1.5 10.5,3.8 11.6,4.3 13.7,3.1 14.9,4.3 13.7,6.4 14.2,7.5" fill="#b8b0e8" stroke="#7a70c0" stroke-width="0.7"/><circle cx="9" cy="9" r="2.2" fill="#fff" stroke="#7a70c0" stroke-width="0.7"/></svg>
<svg class="a" style="left:188px;top:50px" width="32" height="32" viewBox="0 0 32 32"><rect x="4" y="11.500" width="24" height="10" fill="url(#gGold)"/><rect x="4" y="11.500" width="24" height="2" fill="#fff8a0" opacity="0.7"/><path d="M4.500 1v30M27 1v30M1 4.500h30M1 28h30" stroke="#1a3fa8" stroke-width="1.700" fill="none"/></svg>
<svg class="a" style="left:228px;top:50px" width="32" height="32" viewBox="0 0 32 32"><path d="M9.500 1.500h13l7 7v18h-20z" fill="#d8d0f0" stroke="#6a5ab0"/><path d="M22.500 1.500v7h7" fill="#b8a8e0" stroke="#6a5ab0"/><path d="M22 11.500h5v14M20 15.500h7M20 19.500h7" stroke="#2a2ab0" stroke-width="1.600" fill="none"/><path d="M1.500 6.500h13l6 6v18h-19z" fill="url(#gPage)" stroke="#5a6ab0"/><path d="M14.500 6.500v6h6" fill="#b8cff0" stroke="#5a6ab0"/><path d="M5.500 27v-12.500h11.500v12.500M5.500 18.500h11.500M5.500 22.500h11.500" stroke="#1010c0" stroke-width="2" fill="none"/></svg>
<svg class="a" style="left:274px;top:50px" width="32" height="32" viewBox="0 0 32 32"><path d="M5 6l13-4l11 3l-2 16l-13 10l-9-8z M5 6l9 3l13-4M14 9l2 10l-2 12M16 19l11 2M16 19l-11 4" stroke="#8a8a8a" stroke-width="1.600" fill="none"/><circle cx="5" cy="6" r="3.200" fill="url(#gRed)"/><circle cx="18" cy="3" r="3.200" fill="url(#gRed)"/><circle cx="29" cy="6" r="3.200" fill="url(#gRed)"/><circle cx="27" cy="21" r="3.200" fill="url(#gRed)"/><circle cx="14" cy="30" r="3.200" fill="url(#gRed)"/><circle cx="5" cy="23" r="3.200" fill="url(#gRed)"/><circle cx="14" cy="9" r="3.200" fill="url(#gRed)"/><circle cx="16" cy="17" r="7.500" fill="#c8e4fa" stroke="#9a9a9a" stroke-width="1.800"/><circle cx="14" cy="15" r="3" fill="#eaf6ff"/><path d="M21.500 22.500l7 7" stroke="#f08a20" stroke-width="3.600" stroke-linecap="round"/><path d="M26.500 27.500l2.500 2.500" stroke="#d8d8d8" stroke-width="3.400" stroke-linecap="round"/></svg>
<svg class="a" style="left:313px;top:50px" width="32" height="32" viewBox="0 0 32 32"><path d="M4 2.500l20-1q1.500 0 1.500 1.500v25q0 1.500-1.500 1.500l-20 1z" fill="url(#gCalc)" stroke="#2a7ae0" stroke-width="0.8"/><path d="M2.500 3.500l1.500-1v28l-1.500-1z" fill="#1a5ac0"/><rect x="7" y="5" width="16" height="5" fill="#a8e070" stroke="#5aa030" stroke-width="0.5"/><rect x="7.5" y="12.5" width="4" height="3" fill="#f05a3a"/><rect x="13.0" y="12.5" width="4" height="3" fill="#d0d0d0"/><rect x="18.5" y="12.5" width="4" height="3" fill="#d0d0d0"/><rect x="7.5" y="17.0" width="4" height="3" fill="#ffffff"/><rect x="13.0" y="17.0" width="4" height="3" fill="#ffffff"/><rect x="18.5" y="17.0" width="4" height="3" fill="#ffffff"/><rect x="7.5" y="21.5" width="4" height="3" fill="#ffffff"/><rect x="13.0" y="21.5" width="4" height="3" fill="#ffffff"/><rect x="18.5" y="21.5" width="4" height="7.5" fill="#ffffff"/><rect x="7.5" y="26.0" width="4" height="3" fill="#ffffff"/><rect x="13.0" y="26.0" width="4" height="3" fill="#ffffff"/></svg>
<svg class="a" style="left:360px;top:50px" width="32" height="32" viewBox="0 0 32 32"><path d="M20 12q2-6 6-9q3-2 4 0q1 2-1 4q-3 3-3 9z" fill="#3ab82a" stroke="#1a8a1a" stroke-width="0.6"/><circle cx="27.500" cy="4.500" r="1.200" fill="#0a6a10"/><path d="M13 9l14 11l-3 4l-14-11z" fill="#e4e4e4" stroke="#a0a0a0" stroke-width="0.5"/><path d="M10 12.500l14.500 11.500l-8 7.500l-14.500-12z" fill="#ffd820"/><path d="M6 16l14 11.500l-3.500 4l-14.500-12z" fill="#e87a10"/><path d="M8 14.500l14.500 11.500" stroke="#f0a818" stroke-width="2"/></svg>
<svg class="a" style="left:407px;top:50px" width="32" height="32" viewBox="0 0 32 32"><circle cx="16" cy="16" r="14.500" fill="url(#gSilver)" stroke="#9a9a9a" stroke-width="0.8"/><circle cx="16" cy="16" r="11.500" fill="url(#gGreen)"/><text x="16" y="23.500" font-family="Liberation Sans,sans-serif" font-weight="bold" font-size="21" fill="#fff" text-anchor="middle">?</text></svg>
<svg class="a" style="left:446px;top:50px" width="32" height="32" viewBox="0 0 32 32"><g transform="translate(0 1)"><path d="M1 12l15-9l15 13l-17 11z" fill="url(#gBlue)"/><path d="M1 12l15-9l15 13l-16 8z" fill="#2a72e0"/><path d="M1 12l14 12v5l-14-13z" fill="#0a3a9a"/><path d="M15 24l16-8v3l-16 9z" fill="#e0e0e0" stroke="#9a9a9a" stroke-width="0.4"/><path d="M15 28.500l16-9.500v1.500l-16 9.500z" fill="#0a3a9a"/><path d="M12 9l7-4l6 5l-7 4z" fill="#6aa8f4"/></g><circle cx="10" cy="9" r="7.5" fill="url(#gStar)"/><path d="M10 1.5L11.4 6.5L15.25 3.75L12.5 7.6L17.5 9L12.5 10.4L15.25 14.25L11.4 11.5L10 16.5L8.6 11.5L4.75 14.25L7.5 10.4L2.5 9L7.5 7.6L4.75 3.75L8.6 6.5z" fill="#ffd83a"/><circle cx="10" cy="9" r="2.2" fill="#fff6a0"/></svg>
<svg class="a" style="left:485px;top:50px" width="32" height="32" viewBox="0 0 32 32"><g transform="translate(0 0)"><path d="M1 12l15-9l15 13l-17 11z" fill="url(#gBlue)"/><path d="M1 12l15-9l15 13l-16 8z" fill="#2a72e0"/><path d="M1 12l14 12v5l-14-13z" fill="#0a3a9a"/><path d="M15 24l16-8v3l-16 9z" fill="#e0e0e0" stroke="#9a9a9a" stroke-width="0.4"/><path d="M15 28.500l16-9.500v1.500l-16 9.500z" fill="#0a3a9a"/><path d="M12 9l7-4l6 5l-7 4z" fill="#6aa8f4"/></g><rect x="19.500" y="21.500" width="10" height="9.500" fill="#fff" stroke="#8a8a8a"/><path d="M18 20l6 8l9-14" stroke="#1a4ac8" stroke-width="3" fill="none"/></svg>
<svg class="a" style="left:524px;top:50px" width="32" height="32" viewBox="0 0 32 32"><g transform="translate(1 1)"><path d="M7 6l8-1l2-3.500h9l1 3l1 20l-19 3z" fill="#fff2b0" stroke="#c89a18" stroke-width="0.9"/><path d="M1 12l26-4.500l-1 19.500l-19 3.500z" fill="url(#gFold)" stroke="#c89a18" stroke-width="0.9"/></g><rect x="16" y="16" width="15.500" height="15.500" fill="#e8eef8" stroke="#2a4a8a" stroke-width="0.8"/><path d="M17 22l7-5l7 5M17 25.500l7-5l7 5M17 29l7-5l7 5" stroke="#2a4a8a" stroke-width="1.600" fill="none"/><path d="M24 17v14" stroke="#2a4a8a" stroke-width="0.8"/></svg>
<svg class="a" style="left:563px;top:50px" width="32" height="32" viewBox="0 0 32 32"><g transform="translate(3 1)"><path d="M7 6l8-1l2-3.500h9l1 3l1 20l-19 3z" fill="#fff2b0" stroke="#c89a18" stroke-width="0.9"/><path d="M1 12l26-4.500l-1 19.500l-19 3.500z" fill="url(#gFold)" stroke="#c89a18" stroke-width="0.9"/></g><path d="M9 1q-8 3-7 12l6 5l2-6l-3-1q0-4 5-6z" fill="url(#gGreen)"/><path d="M8 14h7v-4l8 7l-8 7v-4h-7z" fill="#8ad05a" opacity="0.85"/></svg>
<svg class="a" style="left:602px;top:50px" width="32" height="32" viewBox="0 0 32 32"><path d="M11 2q10 0 10 7q0 6-8 7l-4 4l0.500-4.500q-7-1-7-6.500q0-7 8.500-7z" fill="url(#gLav)" stroke="#a0a0d8" stroke-width="0.8"/><path d="M6 7h10M6 9.500h10M6 12h10" stroke="#8a8ac0" stroke-width="1"/><path d="M22 13q9 0 9 7q0 5-5 6.500l0.500 4.500l-4.500-4q-9 0-9-7q0-7 9-7z" fill="url(#gLav)" stroke="#a0a0d8" stroke-width="0.8"/><path d="M17 18h10M17 20.500h10M17 23h10" stroke="#8a8ac0" stroke-width="1"/></svg>
<svg class="a" style="left:641px;top:50px" width="32" height="32" viewBox="0 0 32 32"><path d="M2 22q10 6 28-2v6q-14 8-28 2z" fill="#7a7a7a"/><path d="M4 24q8 8 26 4" stroke="#5a5a5a" stroke-width="4" fill="none"/><path d="M2 20v10h8" stroke="#6a6a6a" stroke-width="3" fill="none"/><ellipse cx="16" cy="11" rx="14" ry="9.500" fill="#8a8a8a" stroke="#5a5a5a"/><ellipse cx="16" cy="10" rx="14" ry="9" fill="#b0b0c8"/><ellipse cx="9" cy="6" rx="3.400" ry="2.300" fill="#6a6a6a"/><ellipse cx="22" cy="6" rx="3.400" ry="2.300" fill="#6a6a6a"/><ellipse cx="6" cy="12" rx="3.400" ry="2.300" fill="#6a6a6a"/><ellipse cx="25" cy="12" rx="3.400" ry="2.300" fill="#6a6a6a"/><ellipse cx="16" cy="15.5" rx="3.400" ry="2.300" fill="#6a6a6a"/><ellipse cx="16" cy="9.5" rx="3.400" ry="2.300" fill="#6a6a6a"/></svg>
<svg class="a" style="left:687px;top:50px" width="32" height="32" viewBox="0 0 32 32"><path d="M2 13l13-11l14 9v17l-26 3z" fill="url(#gLav)" stroke="#9a9ad8" stroke-width="0.8"/><path d="M6 8h18v12h-18z" fill="#fff4d8"/><path d="M2 13l13 10l14-12v17l-26 3z" fill="#eaeaff" stroke="#9a9ad8" stroke-width="0.8"/><path d="M3 31l12-9l14 6" stroke="#9a9ad8" stroke-width="0.8" fill="none"/><path d="M28 2q2-1 3 1l-17 22l-4 2l1-4z" fill="#1a4ac0" stroke="#0a2a80" stroke-width="0.6"/><path d="M10 27l1.500-4l2.500 2z" fill="#e0c080"/><path d="M18 15l3 2" stroke="#c0c0c0" stroke-width="2"/></svg>
<svg class="a" style="left:727px;top:50px" width="32" height="32" viewBox="0 0 32 32"><circle cx="16" cy="16" r="14.500" fill="url(#gGlobe)"/><path d="M5 9q4-5 9-5l-1 4l3 2l-3 3l-5-1l-1 4l5 2l3 5l-3 6q-8-3-10-11q0-5 3-9z" fill="#3ab83a"/><path d="M22 4l5 4l-3 3l3 4l2-1q1 6-3 11l-3-4l1-5l-4-4l2-3z" fill="#3ab83a"/></svg>
<svg class="a" style="left:20px;top:145px" width="46" height="48" viewBox="0 0 46 48"><linearGradient id="gBf" x1="0" y1="0" x2="0" y2="1"><stop offset="0" stop-color="#eeeeee"/><stop offset="1" stop-color="#a8a8a8"/></linearGradient><linearGradient id="gBl" x1="0" y1="0" x2="0" y2="1"><stop offset="0" stop-color="#d8d8d8"/><stop offset="1" stop-color="#8e8e8e"/></linearGradient><linearGradient id="gBw" x1="0" y1="0" x2="0" y2="1"><stop offset="0" stop-color="#0a4ac8"/><stop offset="1" stop-color="#2a7af0"/></linearGradient><path d="M3.100 6.600L8.500 3.500L19.300 2.300L40.900 8.100L15.400 10.400z" fill="#f2f2f2" stroke="#a8a8a8" stroke-width="0.6"/><path d="M9 5.500L19 4.200L33 7.600L16 8.800z" fill="#e0e0e0" stroke="#c0c0c0" stroke-width="0.4"/><path d="M3.100 6.600L15.400 10.400V45.100L3.100 37.400z" fill="url(#gBl)" stroke="#8a8a8a" stroke-width="0.5"/><path d="M15.400 10.400L40.900 8.100V41.200L15.400 45.100z" fill="url(#gBf)" stroke="#8a8a8a" stroke-width="0.5"/><path d="M17.4 13.2l4.400-0.400v5.800l-4.400 0.500z" fill="url(#gBw)"/><path d="M25.0 12.6l4.400-0.400v5.800l-4.400 0.500z" fill="url(#gBw)"/><path d="M32.4 12.0l4.400-0.400v5.800l-4.400 0.500z" fill="url(#gBw)"/><path d="M17.4 23.5l4.400-0.400v5.800l-4.400 0.500z" fill="url(#gBw)"/><path d="M25.0 22.599999999999998l4.400-0.400v5.800l-4.400 0.500z" fill="url(#gBw)"/><path d="M32.4 21.7l4.400-0.400v5.800l-4.400 0.500z" fill="url(#gBw)"/><path d="M17.4 34.0l4.400-0.400v5.800l-4.400 0.500z" fill="url(#gBw)"/><path d="M25.0 32.8l4.400-0.400v5.800l-4.400 0.500z" fill="url(#gBw)"/><path d="M32.4 31.599999999999998l4.400-0.400v5.800l-4.400 0.500z" fill="url(#gBw)"/><path d="M5.1 10.4l1.500 0.500v5.300l-1.500-0.500z" fill="url(#gBw)"/><path d="M8.2 11.5l1.500 0.500v5.300l-1.500-0.500z" fill="url(#gBw)"/><path d="M11.3 12.600000000000001l1.500 0.500v5.300l-1.500-0.500z" fill="url(#gBw)"/><path d="M5.1 20.1l1.500 0.500v5.300l-1.500-0.500z" fill="url(#gBw)"/><path d="M8.2 21.200000000000003l1.500 0.500v5.300l-1.500-0.500z" fill="url(#gBw)"/><path d="M11.3 22.3l1.500 0.500v5.300l-1.500-0.500z" fill="url(#gBw)"/><path d="M5.1 29.7l1.500 0.500v5.300l-1.500-0.500z" fill="url(#gBw)"/><path d="M8.2 30.8l1.500 0.500v5.300l-1.500-0.500z" fill="url(#gBw)"/><path d="M11.3 31.9l1.500 0.500v5.300l-1.500-0.500z" fill="url(#gBw)"/></svg><svg class="a" style="left:19px;top:224px" width="50" height="50" viewBox="0 0 50 50"><linearGradient id="gSh" x1="0" y1="0" x2="1" y2="0.3"><stop offset="0" stop-color="#ffffff"/><stop offset="0.6" stop-color="#ececfa"/><stop offset="1" stop-color="#c4c4ea"/></linearGradient><linearGradient id="gRl" x1="0.7" y1="0" x2="0.3" y2="1"><stop offset="0" stop-color="#b0b0c8"/><stop offset="0.4" stop-color="#ffffff"/><stop offset="1" stop-color="#8a8aa8"/></linearGradient><path d="M14 4.500C22 4 30 6.500 37 9.500C33 20 31 30 27 40L10 31C12.500 22 13.500 12 14 4.500z" fill="url(#gSh)" stroke="#8e8ec0" stroke-width="0.7"/><circle cx="39.500" cy="14.200" r="4.700" fill="#c4c4ee" stroke="#7e7eb8" stroke-width="0.7"/><circle cx="39" cy="14.500" r="2.300" fill="#eeeeff" stroke="#8e8ec0" stroke-width="0.5"/><path d="M34 8.300Q40.500 8 44 12.500" fill="none" stroke="#7e7eb8" stroke-width="0.7"/><path d="M6 27.300L25.500 39.500L21.500 47L2.500 35.500z" fill="url(#gRl)" stroke="#7a7aa0" stroke-width="0.6"/><ellipse cx="4.300" cy="31.500" rx="3" ry="4.600" transform="rotate(-25 4.300 31.500)" fill="#e0e0f4" stroke="#7a7aa0" stroke-width="0.6"/><ellipse cx="23.500" cy="43.300" rx="3" ry="4.400" transform="rotate(-25 23.500 43.300)" fill="#9a9ab8" stroke="#6a6a90" stroke-width="0.6"/><circle cx="35" cy="37" r="10.800" fill="url(#gGreen)"/><path d="M28.500 37l5 5l8-9.500" stroke="#fff" stroke-width="3.600" fill="none"/></svg><svg class="a" style="left:18px;top:302px" width="50" height="50" viewBox="0 0 50 50"><g transform="translate(0 0) scale(1)"><path d="M3 21.5l0-2.500l3.500-2.200l2 1.200z" fill="#8a8a8a" stroke="#5a5a5a" stroke-width="0.5"/><path d="M9.3 18.0l0-2.500l3.500-2.200l2 1.200z" fill="#8a8a8a" stroke="#5a5a5a" stroke-width="0.5"/><path d="M16.2 13.7l0-2.500l3.500-2.200l2 1.200z" fill="#8a8a8a" stroke="#5a5a5a" stroke-width="0.5"/><path d="M22.4 9.5l0-2.500l3.500-2.200l2 1.200z" fill="#8a8a8a" stroke="#5a5a5a" stroke-width="0.5"/><path d="M1.300 23.500L29 5L43.600 9.600L19 31.200z" fill="url(#gChipTop)" stroke="#4a4a4a" stroke-width="0.5"/><path d="M1.300 23.500L19 31.200V39.500L1.300 29.500z" fill="#6e6e6e" stroke="#3a3a3a" stroke-width="0.5"/><path d="M19 31.200L43.600 9.600V16L19 39.500z" fill="#3c3c3c"/><path d="M20.2 32.8l5-3v6.500l-2 1.200v2.500l-3 1.800z" fill="#e4e4e4" stroke="#6a6a6a" stroke-width="0.6"/><path d="M27.2 25.9l5-3v6.500l-2 1.200v2.500l-3 1.800z" fill="#e4e4e4" stroke="#6a6a6a" stroke-width="0.6"/><path d="M33.3 19.7l5-3v6.500l-2 1.200v2.500l-3 1.800z" fill="#e4e4e4" stroke="#6a6a6a" stroke-width="0.6"/><path d="M40.3 12.8l5-3v6.500l-2 1.200v2.500l-3 1.800z" fill="#e4e4e4" stroke="#6a6a6a" stroke-width="0.6"/></g><rect x="26.500" y="31.500" width="14.500" height="13.500" rx="1" fill="#fff" stroke="#8a8a8a"/><path d="M26.500 28l6.500 11.500l12-21" stroke="#1a4ac8" stroke-width="4.500" fill="none"/></svg><svg class="a" style="left:18px;top:382px" width="50" height="50" viewBox="0 0 50 50"><g transform="translate(0 0) scale(1)"><path d="M3 21.5l0-2.500l3.500-2.200l2 1.200z" fill="#8a8a8a" stroke="#5a5a5a" stroke-width="0.5"/><path d="M9.3 18.0l0-2.500l3.500-2.200l2 1.200z" fill="#8a8a8a" stroke="#5a5a5a" stroke-width="0.5"/><path d="M16.2 13.7l0-2.500l3.500-2.200l2 1.200z" fill="#8a8a8a" stroke="#5a5a5a" stroke-width="0.5"/><path d="M22.4 9.5l0-2.500l3.500-2.200l2 1.200z" fill="#8a8a8a" stroke="#5a5a5a" stroke-width="0.5"/><path d="M1.300 23.500L29 5L43.600 9.600L19 31.200z" fill="url(#gChipTop)" stroke="#4a4a4a" stroke-width="0.5"/><path d="M1.300 23.500L19 31.200V39.500L1.300 29.500z" fill="#6e6e6e" stroke="#3a3a3a" stroke-width="0.5"/><path d="M19 31.200L43.600 9.600V16L19 39.500z" fill="#3c3c3c"/><path d="M20.2 32.8l5-3v6.500l-2 1.200v2.500l-3 1.800z" fill="#e4e4e4" stroke="#6a6a6a" stroke-width="0.6"/><path d="M27.2 25.9l5-3v6.500l-2 1.200v2.500l-3 1.800z" fill="#e4e4e4" stroke="#6a6a6a" stroke-width="0.6"/><path d="M33.3 19.7l5-3v6.500l-2 1.200v2.500l-3 1.800z" fill="#e4e4e4" stroke="#6a6a6a" stroke-width="0.6"/><path d="M40.3 12.8l5-3v6.500l-2 1.200v2.500l-3 1.800z" fill="#e4e4e4" stroke="#6a6a6a" stroke-width="0.6"/></g><path d="M29.500 25l16.500 10.500l-16.500 10.500z" fill="url(#gGreen)" stroke="#7ad060" stroke-width="1.500" stroke-linejoin="round"/></svg><svg class="a" style="left:20px;top:464px" width="46" height="46" viewBox="0 0 46 46"><circle cx="22.500" cy="23" r="22" fill="url(#gGreen)"/><path d="M9 24l10.500 10.500l17-20" stroke="#fff" stroke-width="7" fill="none" stroke-linejoin="miter"/></svg><svg class="a" style="left:21px;top:538px" width="42" height="50" viewBox="0 0 42 50"><path d="M1.500 1.500h26l10 10v36h-36z" fill="#f4f7fc" stroke="#8a9ac0"/><path d="M27.500 1.500v10h10" fill="#dde6f4" stroke="#8a9ac0"/><path d="M6 8h9M6 12h6M22 12h8M6 16h10M22 16h8" stroke="#6a7aa0" stroke-width="1.300"/><rect x="6" y="22" width="27" height="12" fill="#fff" stroke="#7a8ab8" stroke-width="0.8"/><path d="M6 26h27M6 30h27M15 22v12M24 22v12" stroke="#7a8ab8" stroke-width="0.8"/><rect x="6" y="22" width="27" height="4" fill="#c8d4ec"/><path d="M6 38h10M6 41.500h10" stroke="#9aaad0" stroke-width="1.200"/></svg>
<svg class="a" style="left:1851px;top:176px" width="36" height="34" viewBox="0 0 36 34"><path d="M11 2l8 17q-7 4-15 0z" fill="url(#gRed)" stroke="#c02000" stroke-width="0.7"/><path d="M11 4l-5 14q3 1.500 5 1.500z" fill="#ffd090" opacity="0.8"/><path d="M9 16q0 10 8 10v-3l6 5l-6 5v-3q-12 0-11-14z" fill="#2ab02a" stroke="#0a7a0a" stroke-width="0.6"/><path d="M18 19l8-3l8 3v10l-8 4l-8-4z" fill="#2a6ae0"/><path d="M18 19l8-3l8 3l-8 3.500z" fill="#8ab8f8"/><path d="M26 22.500l8-3.500v10l-8 4z" fill="#0a3ab0"/></svg><svg class="a" style="left:1853px;top:231px" width="32" height="36" viewBox="0 0 32 36"><path d="M3 5q0-2 2-2l22-1q2 0 2 2v27q0 2-2 2l-22 1q-2 0-2-2z" fill="#2a6ae0"/><rect x="6" y="5" width="20" height="26" fill="#f4f8ff"/><path d="M11 4h10v3h-10z" fill="#6a9af0"/><path d="M10 12l3 4l6-8M10 22l3 4l6-8" stroke="#e02020" stroke-width="2.200" fill="none"/><path d="M9 10h6v6h-6zM9 20h6v6h-6z" stroke="#8a8a8a" stroke-width="0.7" fill="none"/></svg><svg class="a" style="left:1851px;top:288px" width="34" height="32" viewBox="0 0 34 32"><path d="M1 19l16-7l16 7l-16 8z" fill="#c8c8c8"/><path d="M1 19v3l16 8l16-8v-3l-16 8z" fill="#a0a0a0"/><path d="M1 15l16-7l16 7l-16 8z" fill="#a8dcb8"/><path d="M1 15v3l16 8l16-8v-3l-16 8z" fill="#8ac8a0"/><path d="M1 10l16-7l16 7l-16 8z" fill="#4a94ec"/><path d="M1 10v3l16 8l16-8v-3l-16 8z" fill="#2a6ad0"/></svg>
<svg class="a" style="left:2px;top:3px" width="16" height="16" viewBox="0 0 16 16"><rect x="0.500" y="0.500" width="15" height="15" fill="#fff" stroke="#4a6a9e"/><path d="M1 12.500L5.800 11L15 14.500V15H1z" fill="#3f5f92"/><path d="M2 3.9L5.800 1.6L14.300 6.6" stroke="#0b4590" stroke-width="1.600" fill="none"/><path d="M2 6.9L5.800 4.6L14.300 9.6" stroke="#0b4590" stroke-width="1.600" fill="none"/><path d="M2 9.9L5.800 7.6L14.300 12.6" stroke="#0b4590" stroke-width="1.600" fill="none"/><path d="M2 12.7L5.800 10.4L14.300 15.4" stroke="#0b4590" stroke-width="1.600" fill="none"/><path d="M5.800 1.500v13" stroke="#7f9cc4" stroke-width="0.700"/><path d="M1 1L5.800 1L1 5z M7 1H15V6z" fill="#fff"/></svg>
</body></html>
